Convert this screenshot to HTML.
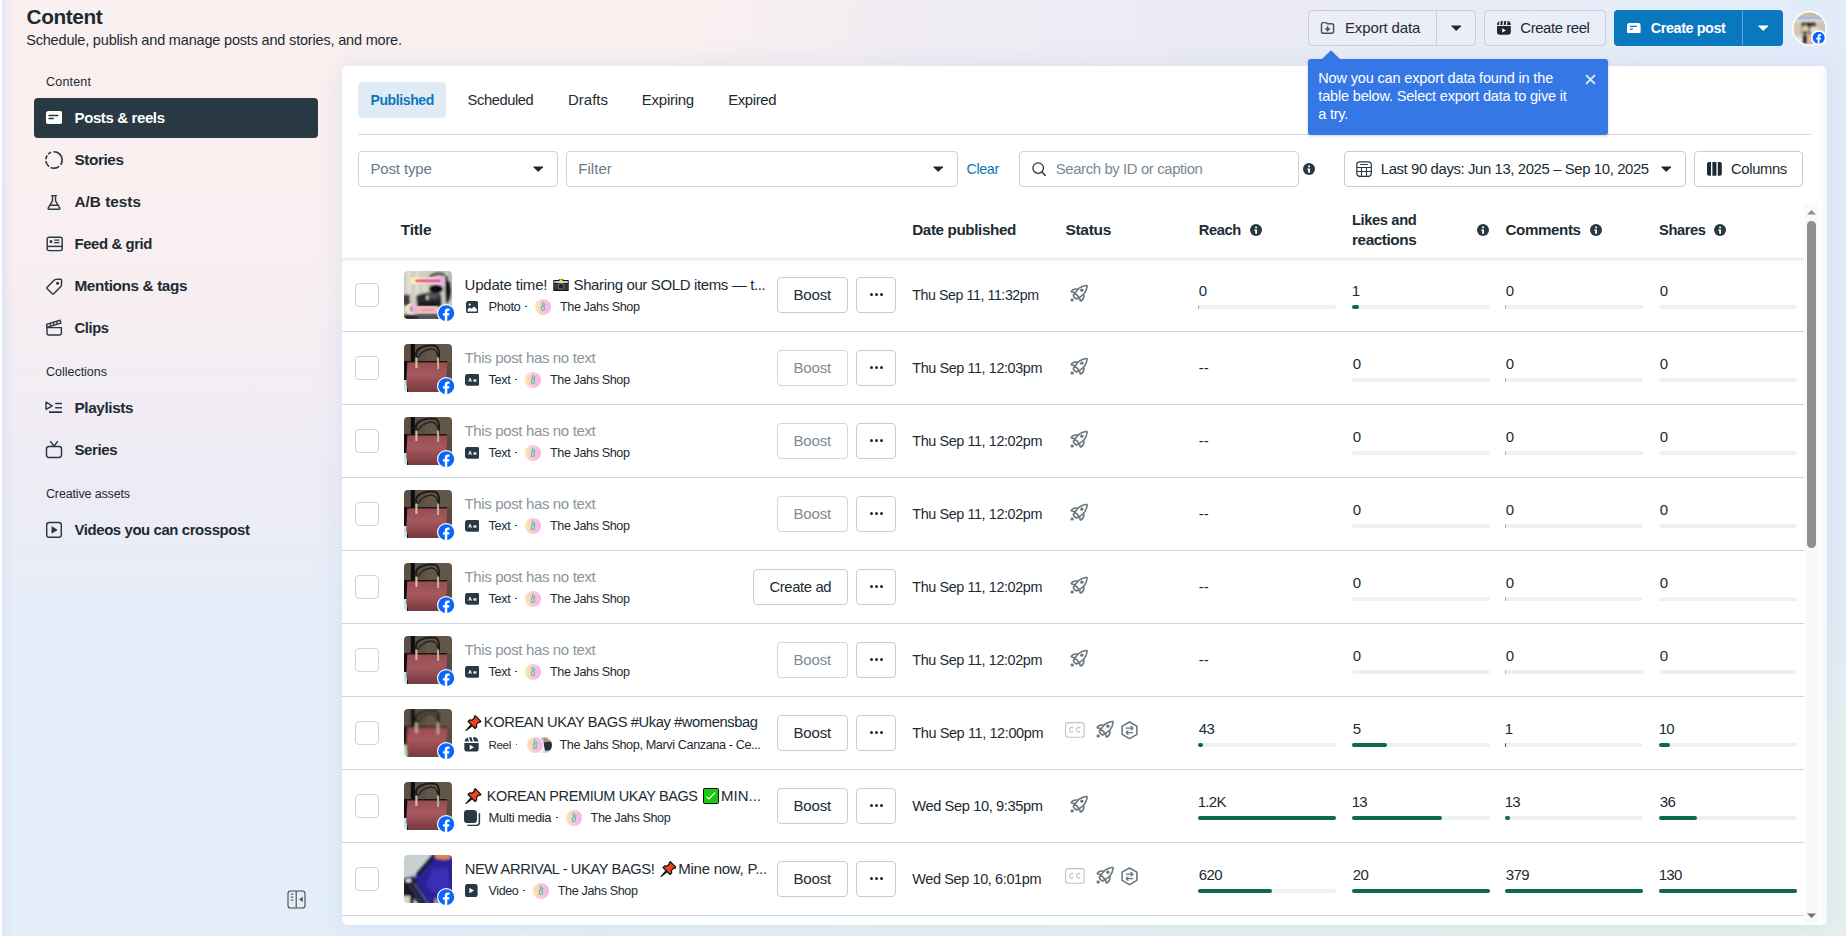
<!DOCTYPE html><html><head><meta charset="utf-8"><title>Content</title><style>
*{box-sizing:border-box;margin:0;padding:0}
html,body{width:1846px;height:936px;overflow:hidden}
body{position:relative;font-family:"Liberation Sans",sans-serif;color:#1c2b33;background:#e6ecf7;}
.abs,.t,svg.i{position:absolute}
.t{white-space:nowrap;line-height:20px;height:20px;display:block}
.bg{left:0;top:0;width:1846px;height:936px}
.panel{left:342px;top:66px;width:1485px;height:859px;background:#fff;border-radius:6px;box-shadow:0 0 24px rgba(175,195,232,.33)}
.btn{border:1px solid #c5ced6;border-radius:4px;background:#fff;height:36px}
.btn.dis{border-color:#d0d6dc}
.inp{border:1px solid #cbd3db;border-radius:4px;background:#fff;height:36px}
.cb{width:24px;height:24px;border:1px solid #ccd3da;border-radius:4px;background:#fff;left:355px}
.rowline{left:342px;width:1462px;height:1px;background:#cdd4dc}
.bar{height:4px;border-radius:2px;background:#eef1f4;width:138px}
.fill{height:4px;border-radius:2px;background:#0a6a50;left:0;top:0}
.thumb{left:404px;width:48px;height:48px;border-radius:5px;overflow:hidden}
.fb{width:18px;height:18px}
.av{width:16px;height:16px;border-radius:50%}
</style></head><body>
<div class="abs bg" style="background:linear-gradient(180deg,#faf0ef 0%,#f9eff0 26%,#f1ecf4 44%,#ebecf6 56%,#e4eef9 68%,#e3eef9 100%)"></div>
<div class="abs bg" style="background:linear-gradient(90deg,rgba(236,234,245,0) 36%,rgba(238,235,244,.9) 52%,#ebebf5 68%,#e7ecf7 84%,#e1ebf9 100%)"></div>
<div class="abs bg" style="background:radial-gradient(ellipse 1500px 400px at 100% 100%,rgba(228,241,238,1) 0,rgba(228,241,238,.95) 45%,rgba(228,241,238,0) 100%)"></div>
<div class="abs" style="left:2px;top:0;width:12px;height:936px;background:linear-gradient(90deg,rgba(222,226,246,.75),rgba(222,226,246,0))"></div>
<div class="abs" style="left:0;top:0;width:2px;height:936px;background:#fff"></div>
<span class="t" style="left:26.60px;top:7.49px;font-size:20.80px;font-weight:700;color:#1c2b33;letter-spacing:-0.410px;">Content</span>
<span class="t" style="left:26.20px;top:29.88px;font-size:14.50px;color:#1c2b33;letter-spacing:-0.184px;">Schedule, publish and manage posts and stories, and more.</span>
<span class="t" style="left:46.00px;top:71.67px;font-size:12.50px;color:#1c2b33;letter-spacing:0.203px;">Content</span>
<div class="abs" style="left:34px;top:98px;width:284px;height:40px;border-radius:4px;background:#283943"></div>
<span class="t" style="left:74.50px;top:108.10px;font-size:15.00px;font-weight:700;color:#fff;letter-spacing:-0.379px;">Posts &amp; reels</span>
<span class="t" style="left:74.50px;top:150.00px;font-size:15.30px;font-weight:700;color:#1c2b33;letter-spacing:-0.395px;">Stories</span>
<span class="t" style="left:74.50px;top:192.00px;font-size:15.30px;font-weight:700;color:#1c2b33;letter-spacing:0.023px;">A/B tests</span>
<span class="t" style="left:74.50px;top:234.14px;font-size:14.90px;font-weight:700;color:#1c2b33;letter-spacing:-0.396px;">Feed &amp; grid</span>
<span class="t" style="left:74.50px;top:276.00px;font-size:15.30px;font-weight:700;color:#1c2b33;letter-spacing:-0.368px;">Mentions &amp; tags</span>
<span class="t" style="left:74.50px;top:318.21px;font-size:14.70px;font-weight:700;color:#1c2b33;letter-spacing:-0.360px;">Clips</span>
<span class="t" style="left:74.50px;top:398.00px;font-size:15.30px;font-weight:700;color:#1c2b33;letter-spacing:-0.386px;">Playlists</span>
<span class="t" style="left:74.50px;top:440.10px;font-size:15.00px;font-weight:700;color:#1c2b33;letter-spacing:-0.407px;">Series</span>
<span class="t" style="left:74.50px;top:520.14px;font-size:14.90px;font-weight:700;color:#1c2b33;letter-spacing:-0.386px;">Videos you can crosspost</span>
<span class="t" style="left:46.00px;top:361.67px;font-size:12.50px;color:#1c2b33;letter-spacing:-0.014px;">Collections</span>
<span class="t" style="left:46.00px;top:483.67px;font-size:12.50px;color:#1c2b33;letter-spacing:-0.153px;">Creative assets</span>
<svg class="i" style="left:46.00px;top:111.40px;" width="16.4" height="13" viewBox="0 0 16.4 13"><rect x="0" y="0" width="16.4" height="13" rx="2.6" fill="#fff"/><path d="M3 4.6H11.8M3 7.6H7.3" stroke="#283943" stroke-width="1.5" stroke-linecap="round"/></svg>
<svg class="i" style="left:44.00px;top:150.00px;" width="20" height="20" viewBox="0 0 20 20"><circle cx="10" cy="10" r="8.2" fill="none" stroke="#283943" stroke-width="1.65" stroke-dasharray="18.4 2.1 9 1.8 6.5 1.8 4 1.5 3.5 2.9" transform="rotate(-93 10 10)"/></svg>
<svg class="i" style="left:46.00px;top:193.60px;" width="16" height="17" viewBox="0 0 16 17"><path d="M5.6 1.6H10.4 M6.5 1.8V6.8L2.3 13.8Q1.6 15.2 3.2 15.3H12.8Q14.4 15.2 13.7 13.8L9.5 6.8V1.8 M4.2 11.2H11.8" fill="none" stroke="#283943" stroke-width="1.45" stroke-linecap="round" stroke-linejoin="round"/></svg>
<svg class="i" style="left:45.50px;top:236.00px;" width="17.5" height="16" viewBox="0 0 17.5 16"><rect x="1.2" y="1.2" width="15" height="13.4" rx="1.8" fill="none" stroke="#283943" stroke-width="1.45"/><circle cx="5" cy="5.4" r="1.5" fill="#283943"/><path d="M8.2 4.2H13.4M8.2 6.6H13.4" stroke="#283943" stroke-width="1.2"/><path d="M1.2 10.4H16.2" stroke="#283943" stroke-width="1.45"/></svg>
<svg class="i" style="left:45.00px;top:277.00px;" width="19" height="19" viewBox="0 0 19 19"><path d="M2.2 10.3L9.3 3.1Q10 2.4 11 2.4L15.2 2.3Q16.6 2.3 16.6 3.7L16.5 7.9Q16.5 8.9 15.8 9.6L8.7 16.7Q8 17.4 7.3 16.7L2.2 11.7Q1.5 11 2.2 10.3Z" fill="none" stroke="#283943" stroke-width="1.45" stroke-linejoin="round"/><circle cx="12.6" cy="6.3" r="1.5" fill="#283943"/></svg>
<svg class="i" style="left:45.00px;top:318.00px;" width="19" height="19" viewBox="0 0 19 19"><path d="M2 9.6H16.4V15.3Q16.4 17 14.7 17H3.7Q2 17 2 15.3Z" fill="none" stroke="#283943" stroke-width="1.45" stroke-linejoin="round"/><path d="M2.1 9.3L1.5 6.4L15 2.2L15.9 5.1Z" fill="none" stroke="#283943" stroke-width="1.45" stroke-linejoin="round"/><path d="M5 5.3L6 8.1M8.2 4.3L9.2 7.1M11.4 3.3L12.4 6.1" stroke="#283943" stroke-width="1.3"/></svg>
<svg class="i" style="left:44.00px;top:399.00px;" width="20" height="16" viewBox="0 0 20 16"><path d="M2 3.2V10.4L8.2 6.8Z" fill="none" stroke="#283943" stroke-width="1.4" stroke-linejoin="round"/><path d="M11.2 4.5H18M11.2 8.8H18M5 13.1H18" stroke="#283943" stroke-width="1.6"/></svg>
<svg class="i" style="left:45.00px;top:440.00px;" width="18" height="19" viewBox="0 0 18 19"><rect x="1.5" y="6.4" width="15" height="11" rx="2.4" fill="none" stroke="#283943" stroke-width="1.45"/><path d="M5.6 1.6L9 6.2L12.4 1.6" fill="none" stroke="#283943" stroke-width="1.45" stroke-linecap="round" stroke-linejoin="round"/></svg>
<svg class="i" style="left:45.00px;top:521.00px;" width="18" height="18" viewBox="0 0 18 18"><rect x="1.7" y="1.5" width="14.6" height="14.8" rx="2.6" fill="none" stroke="#283943" stroke-width="1.45"/><path d="M6.9 5.6V12.2L12.2 8.9Z" fill="#283943" stroke="#283943" stroke-width=".6" stroke-linejoin="round"/></svg>
<svg class="i" style="left:286.50px;top:889.50px;" width="19" height="19" viewBox="0 0 19 19"><rect x="1" y="1" width="17" height="17" rx="2.6" fill="none" stroke="#45494e" stroke-width="1.1"/><path d="M9.2 1V18" stroke="#45494e" stroke-width="1.1"/><path d="M3.7 4.1H6.4M3.7 7.1H6.4M3.7 10.1H6.4" stroke="#45494e" stroke-width="1"/><path d="M12.2 9.4L15.6 6.8V12Z" fill="#45494e"/></svg>
<div class="abs panel"></div>
<div class="abs" style="left:358px;top:82px;width:88px;height:36px;border-radius:4px;background:#e1ebf5"></div>
<span class="t" style="left:370.50px;top:90.15px;font-size:14.00px;font-weight:700;color:#0a78be;letter-spacing:-0.393px;">Published</span>
<span class="t" style="left:467.60px;top:89.91px;font-size:14.70px;color:#1c2b33;letter-spacing:-0.409px;">Scheduled</span>
<span class="t" style="left:568.00px;top:89.80px;font-size:15.00px;color:#1c2b33;letter-spacing:-0.001px;">Drafts</span>
<span class="t" style="left:641.80px;top:89.80px;font-size:15.00px;color:#1c2b33;letter-spacing:-0.256px;">Expiring</span>
<span class="t" style="left:728.20px;top:89.84px;font-size:14.90px;color:#1c2b33;letter-spacing:-0.370px;">Expired</span>
<div class="abs" style="left:358px;top:134px;width:1453px;height:1px;background:#d7dce1"></div>
<div class="abs inp" style="left:358px;top:151px;width:200px"></div>
<span class="t" style="left:370.50px;top:158.80px;font-size:15.00px;color:#68798a;letter-spacing:-0.161px;">Post type</span>
<div class="abs inp" style="left:566px;top:151px;width:392px"></div>
<span class="t" style="left:578.25px;top:158.80px;font-size:15.00px;color:#68798a;letter-spacing:0.033px;">Filter</span>
<span class="t" style="left:966.50px;top:159.01px;font-size:14.40px;color:#0a78be;letter-spacing:-0.415px;">Clear</span>
<div class="abs inp" style="left:1019px;top:151px;width:280px"></div>
<span class="t" style="left:1055.75px;top:158.84px;font-size:14.90px;color:#7b8994;letter-spacing:-0.384px;">Search by ID or caption</span>
<div class="abs btn" style="left:1344px;top:151px;width:342px"></div>
<span class="t" style="left:1380.75px;top:158.84px;font-size:14.90px;color:#1c2b33;letter-spacing:-0.391px;">Last 90 days: Jun 13, 2025 – Sep 10, 2025</span>
<div class="abs btn" style="left:1694px;top:151px;width:109px"></div>
<span class="t" style="left:1731.00px;top:158.87px;font-size:14.80px;color:#1c2b33;letter-spacing:-0.358px;">Columns</span>
<svg class="i" style="left:532.75px;top:166.00px;" width="10.5" height="6" viewBox="0 0 10.5 6"><path d="M0.6 0.4H9.9 Q10.5 0.6 10 1.3L5.75 5.6 Q5.25 6 4.75 5.6L0.5 1.3Q0 0.6 0.6 0.4Z" fill="#1c2b33"/></svg>
<svg class="i" style="left:932.75px;top:166.00px;" width="10.5" height="6" viewBox="0 0 10.5 6"><path d="M0.6 0.4H9.9 Q10.5 0.6 10 1.3L5.75 5.6 Q5.25 6 4.75 5.6L0.5 1.3Q0 0.6 0.6 0.4Z" fill="#1c2b33"/></svg>
<svg class="i" style="left:1660.75px;top:166.00px;" width="10.5" height="6" viewBox="0 0 10.5 6"><path d="M0.6 0.4H9.9 Q10.5 0.6 10 1.3L5.75 5.6 Q5.25 6 4.75 5.6L0.5 1.3Q0 0.6 0.6 0.4Z" fill="#1c2b33"/></svg>
<svg class="i" style="left:1031.00px;top:161.00px;" width="16" height="16" viewBox="0 0 16 16"><circle cx="7.2" cy="7.1" r="5.3" fill="none" stroke="#283943" stroke-width="1.35"/><path d="M11.1 11.1L14.3 14.4" stroke="#283943" stroke-width="1.5" stroke-linecap="round"/></svg>
<svg class="i" style="left:1303.00px;top:163.00px;" width="12" height="12" viewBox="0 0 12 12"><circle cx="6" cy="6" r="6" fill="#283943"/><rect x="5.1" y="2.4" width="1.9" height="1.9" rx=".5" fill="#fff"/><path d="M4.4 5.5H7V9.8H5.2V6.9H4.4Z" fill="#fff"/></svg>
<svg class="i" style="left:1355.00px;top:160.00px;" width="18" height="18" viewBox="0 0 18 18"><rect x="1.8" y="1.8" width="14.5" height="14.5" rx="3" fill="none" stroke="#283943" stroke-width="1.2"/><path d="M5.6 4.5H12.5" stroke="#283943" stroke-width="1.2" stroke-linecap="round"/><path d="M1.8 7.5H16.3M1.8 11.5H16.3M6.5 7.5V16.3M11.5 7.5V16.3" stroke="#283943" stroke-width="1.1"/></svg>
<svg class="i" style="left:1706.70px;top:162.00px;" width="15" height="14" viewBox="0 0 15 14"><path d="M0 2Q0 0 2 0H4V13.8H2Q0 13.8 0 11.8Z M5.4 0H9.4V13.8H5.4Z M10.8 0H12.8Q14.8 0 14.8 2V11.8Q14.8 13.8 12.8 13.8H10.8Z" fill="#1c2b33"/></svg>
<div class="abs" style="left:342px;top:258px;width:1462px;height:6px;background:linear-gradient(180deg,rgba(0,0,0,.10) 0,rgba(0,0,0,.045) 30%,rgba(0,0,0,.012) 65%,rgba(0,0,0,0) 100%)"></div>
<span class="t" style="left:400.75px;top:219.83px;font-size:15.50px;font-weight:700;color:#1c2b33;letter-spacing:-0.208px;">Title</span>
<span class="t" style="left:912.25px;top:219.93px;font-size:15.20px;font-weight:700;color:#1c2b33;letter-spacing:-0.369px;">Date published</span>
<span class="t" style="left:1065.50px;top:219.83px;font-size:15.50px;font-weight:700;color:#1c2b33;letter-spacing:-0.324px;">Status</span>
<span class="t" style="left:1198.75px;top:220.11px;font-size:14.70px;font-weight:700;color:#1c2b33;letter-spacing:-0.405px;">Reach</span>
<span class="t" style="left:1352.00px;top:210.11px;font-size:14.70px;font-weight:700;color:#1c2b33;letter-spacing:-0.382px;">Likes and</span>
<span class="t" style="left:1352.00px;top:229.90px;font-size:15.30px;font-weight:700;color:#1c2b33;letter-spacing:-0.410px;">reactions</span>
<span class="t" style="left:1505.50px;top:219.97px;font-size:15.10px;font-weight:700;color:#1c2b33;letter-spacing:-0.361px;">Comments</span>
<span class="t" style="left:1659.00px;top:220.11px;font-size:14.70px;font-weight:700;color:#1c2b33;letter-spacing:-0.406px;">Shares</span>
<svg class="i" style="left:1250.00px;top:224.00px;" width="12" height="12" viewBox="0 0 12 12"><circle cx="6" cy="6" r="6" fill="#283943"/><rect x="5.1" y="2.4" width="1.9" height="1.9" rx=".5" fill="#fff"/><path d="M4.4 5.5H7V9.8H5.2V6.9H4.4Z" fill="#fff"/></svg>
<svg class="i" style="left:1477.00px;top:224.00px;" width="12" height="12" viewBox="0 0 12 12"><circle cx="6" cy="6" r="6" fill="#283943"/><rect x="5.1" y="2.4" width="1.9" height="1.9" rx=".5" fill="#fff"/><path d="M4.4 5.5H7V9.8H5.2V6.9H4.4Z" fill="#fff"/></svg>
<svg class="i" style="left:1590.00px;top:224.00px;" width="12" height="12" viewBox="0 0 12 12"><circle cx="6" cy="6" r="6" fill="#283943"/><rect x="5.1" y="2.4" width="1.9" height="1.9" rx=".5" fill="#fff"/><path d="M4.4 5.5H7V9.8H5.2V6.9H4.4Z" fill="#fff"/></svg>
<svg class="i" style="left:1714.00px;top:224.00px;" width="12" height="12" viewBox="0 0 12 12"><circle cx="6" cy="6" r="6" fill="#283943"/><rect x="5.1" y="2.4" width="1.9" height="1.9" rx=".5" fill="#fff"/><path d="M4.4 5.5H7V9.8H5.2V6.9H4.4Z" fill="#fff"/></svg>
<!--ROW0-->
<div class="abs rowline" style="top:331px"></div>
<div class="abs cb" style="top:283.0px"></div>
<svg class="i" style="left:404px;top:271.0px" width="48" height="48" viewBox="0 0 48 48"><defs><clipPath id="tc0"><rect width="48" height="48" rx="4"/></clipPath><linearGradient id="pl0" x1="0" x2="1" y1="0" y2="0"><stop offset="0" stop-color="#fbf3a6"/><stop offset=".45" stop-color="#f9c0c9"/><stop offset="1" stop-color="#f5a4ea"/></linearGradient><filter id="pf0" x="-10%" y="-10%" width="120%" height="120%"><feGaussianBlur stdDeviation="1"/></filter><filter id="pg0" x="-10%" y="-10%" width="120%" height="120%"><feGaussianBlur stdDeviation=".5"/></filter></defs><g clip-path="url(#tc0)"><g filter="url(#pf0)"><rect x="-4" y="-4" width="56" height="56" fill="#cfcdc0"/><rect x="3" y="-2" width="4" height="30" fill="#e2e0d6"/><rect x="11" y="-2" width="4" height="30" fill="#dedcd0"/><rect x="19" y="10" width="5" height="16" fill="#dcd8c6"/><path d="M25 5Q32 -1 41 2.6L40 5.2Q33 2.4 27 6.6Z" fill="#2a2a2c"/><path d="M41 4Q47 6 47.5 20Q47 32 42 33L41 20Z" fill="#19181b"/><rect x="44" y="-2" width="6" height="12" fill="#b9bcb8"/><ellipse cx="32" cy="18" rx="7.2" ry="4.6" fill="#0e0e10"/><path d="M12 25Q22 19 37 23L38 34L13 34Z" fill="#2c2c30"/><ellipse cx="29" cy="25" rx="6" ry="3" fill="#515158"/><ellipse cx="23.4" cy="26.6" rx="1.1" ry="2.4" fill="#e8e8ea"/><path d="M13 31H37V36H13Z" fill="#1a1a1d"/><rect x="-2" y="23.6" width="8" height="11" fill="#3c3c44"/><rect x="-2" y="43.4" width="52" height="6" fill="#26262a"/><rect x="14" y="42.4" width="20" height="7" fill="#55555a"/></g><g filter="url(#pg0)"><rect x="6.5" y="6" width="34" height="7.4" rx="3" fill="url(#pl0)"/><rect x="11.5" y="8.6" width="25" height="2.6" rx="1" fill="#cf5f8c" opacity=".8"/><rect x="9" y="35.2" width="25" height="7" rx="2" fill="#f4b7c3"/><rect x="16.5" y="37.8" width="14" height="2" rx="1" fill="#ee9a86" opacity=".85"/><circle cx="7.6" cy="37.8" r="5.9" fill="url(#pl0)"/><ellipse cx="7.6" cy="37.8" rx="1.5" ry="2.6" fill="#62c3c0"/></g></g></svg><svg class="i" style="left:436.80px;top:303.70px;" width="18.4" height="18.4" viewBox="0 0 18.4 18.4"><circle cx="9.2" cy="9.2" r="9.2" fill="#fff"/><circle cx="9.2" cy="9.2" r="8" fill="#0866ff"/><path transform="translate(9.2 9.2) scale(1)" d="M1.1 8V2.3H3L3.3 0H1.1V-1.4Q1.1 -2.5 2.3 -2.5H3.4V-4.6Q2.6 -4.8 1.6 -4.8Q-1.4 -4.8 -1.4 -1.7V0H-3.3V2.3H-1.4V8Z" fill="#fff"/></svg><svg class="i" style="left:465.70px;top:300.70px;" width="12.4" height="12.4" viewBox="0 0 12.4 12.4"><rect width="12.4" height="12.4" rx="2.6" fill="#283943"/><circle cx="3.7" cy="3.6" r="1.1" fill="#fff"/><path d="M1.6 10.6V8.2L3.8 6.4L5.6 7.8L8 5.6L10.8 8V10.6Z" fill="#fff"/></svg><svg class="i" style="left:535.00px;top:298.80px;" width="16" height="16" viewBox="0 0 16 16"><defs><linearGradient id="aga0" x1="0" x2="1" y1="0" y2="0"><stop offset="0" stop-color="#fde6a8"/><stop offset=".35" stop-color="#fbd3c8"/><stop offset="1" stop-color="#f9aef0"/></linearGradient></defs><circle cx="8" cy="8" r="8" fill="url(#aga0)"/><path d="M8 3.2Q6.6 4.6 7.6 6.4Q9.4 7.2 9.6 9.2Q9.4 11.4 7.6 11.6Q6.4 11.4 6.6 10.2M9.2 5Q10 5.2 9.8 6.2M6.6 7.6Q6 8.4 6.6 9" fill="none" stroke="#4bbdb9" stroke-width="1.35" stroke-linecap="round" opacity=".9"/><path d="M4.2 6.4L5.2 5.6M11.2 6.2L11.8 6.8M4.6 11.8H11" stroke="#b9a6a6" stroke-width=".5" opacity=".7"/></svg><svg class="i" style="left:552.80px;top:278.90px;" width="16" height="12.4" viewBox="0 0 16 12.4"><path d="M0.3 1.4Q0.3 0.9 0.8 0.9H5.4L6 0.2H10L10.6 0.9H15.2Q15.7 0.9 15.7 1.4V11.2Q15.7 12.2 14.7 12.2H1.3Q0.3 12.2 0.3 11.2Z" fill="#111"/><rect x="1.2" y="4.6" width="13.6" height="6.4" fill="#383838"/><rect x="1.2" y="2.2" width="13.6" height="1.6" fill="#fff"/><circle cx="2.6" cy="3" r=".7" fill="#f55"/><circle cx="8" cy="1.9" r="1.7" fill="#f2e30d"/><circle cx="8" cy="7.3" r="3" fill="#222" stroke="#999" stroke-width=".7"/></svg>
<span class="t" style="left:464.50px;top:275.00px;font-size:15.00px;color:#1c2b33;letter-spacing:-0.186px;">Update time!</span>
<span class="t" style="left:573.50px;top:275.00px;font-size:15.00px;color:#1c2b33;letter-spacing:-0.369px;">Sharing our SOLD items — t...</span>
<span class="t" style="left:488.50px;top:296.80px;font-size:13.00px;color:#1c2b33;letter-spacing:-0.418px;">Photo</span>
<div class="abs" style="left:525.10px;top:305.50px;width:1.8px;height:1.8px;border-radius:50%;background:#1c2b33"></div>
<span class="t" style="left:560.00px;top:296.93px;font-size:12.60px;color:#1c2b33;letter-spacing:-0.396px;">The Jahs Shop</span>
<div class="abs btn" style="left:777px;top:277.0px;width:71px"></div>
<span class="t" style="left:793.50px;top:284.80px;font-size:15.00px;color:#1c2b33;letter-spacing:-0.152px;">Boost</span>
<div class="abs btn" style="left:856px;top:277.0px;width:40px"></div>
<div class="abs" style="left:869.5px;top:293.0px;width:3px;height:3px;border-radius:50%;background:#1c2b33"></div>
<div class="abs" style="left:874.5px;top:293.0px;width:3px;height:3px;border-radius:50%;background:#1c2b33"></div>
<div class="abs" style="left:879.5px;top:293.0px;width:3px;height:3px;border-radius:50%;background:#1c2b33"></div>
<span class="t" style="left:912.25px;top:285.08px;font-size:14.20px;color:#1c2b33;letter-spacing:-0.415px;">Thu Sep 11, 11:32pm</span>
<svg class="i" style="left:1070.30px;top:283.60px;" width="18" height="18" viewBox="0 0 18 18"><g fill="none" stroke="#69747c" stroke-width="1.55" stroke-linecap="round" stroke-linejoin="round"><path d="M4.6 9.9Q8.2 2.6 15.9 1.4Q17.3 1.2 17.1 2.6Q15.9 10.3 8.6 13.9"/><ellipse cx="5.9" cy="12.4" rx="2.9" ry="1.75" transform="rotate(45 5.9 12.4)"/><path d="M7.2 5.1Q3.4 4.6 1.2 7.2Q1.1 7.8 1.8 7.9L4.4 8.6"/><path d="M13.9 11.2Q14.2 14.8 10.9 17Q10.2 17.2 10.1 16.4L9.6 13.8"/></g><circle cx="11.85" cy="6.2" r="1.65" fill="#69747c"/><rect x=".6" y="14.5" width="3.1" height="3.1" rx="1.3" fill="#69747c"/></svg>
<span class="t" style="left:1198.75px;top:280.80px;font-size:15.00px;color:#1c2b33;letter-spacing:-0.65px;">0</span>
<div class="abs bar" style="left:1198px;top:305.0px"><div class="abs fill" style="width:0.3px;opacity:.45"></div></div>
<span class="t" style="left:1351.65px;top:280.80px;font-size:15.00px;color:#1c2b33;letter-spacing:-0.65px;">1</span>
<div class="abs bar" style="left:1352px;top:305.0px"><div class="abs fill" style="width:6.5px"></div></div>
<span class="t" style="left:1505.75px;top:280.80px;font-size:15.00px;color:#1c2b33;letter-spacing:-0.65px;">0</span>
<div class="abs bar" style="left:1505px;top:305.0px"><div class="abs fill" style="width:0.3px;opacity:.45"></div></div>
<span class="t" style="left:1659.75px;top:280.80px;font-size:15.00px;color:#1c2b33;letter-spacing:-0.65px;">0</span>
<div class="abs bar" style="left:1659px;top:305.0px"></div>
<!--ROW1-->
<div class="abs rowline" style="top:404px"></div>
<div class="abs cb" style="top:356.0px"></div>
<svg class="i" style="left:404px;top:344.0px" width="48" height="48" viewBox="0 0 48 48"><defs><clipPath id="tc1"><rect width="48" height="48" rx="4"/></clipPath><linearGradient id="bg1" x1="0" y1="0" x2="0" y2="1"><stop offset="0" stop-color="#9a4a52"/><stop offset=".45" stop-color="#a5595e"/><stop offset="1" stop-color="#7a3940"/></linearGradient><filter id="bf1" x="-10%" y="-10%" width="120%" height="120%"><feGaussianBlur stdDeviation="0.35"/></filter></defs><g clip-path="url(#tc1)"><g filter="url(#bf1)"><rect x="-4" y="-4" width="56" height="56" fill="#5b5044"/><rect x="22" y="-2" width="30" height="22" fill="#62574a"/><rect x="6.8" y="-2" width="4" height="22" fill="#0c0b0a"/><rect x="-2" y="17" width="6" height="35" fill="#15110f"/><rect x="-2" y="36" width="5" height="16" fill="#bfe6ea"/><path d="M3.4 17.6H43.2L43.6 35L41 47.5H4.5L2.2 40Z" fill="url(#bg1)"/><path d="M3.4 17.8H43.2" stroke="#1d1614" stroke-width="1.5"/><path d="M12.3 19V12Q10.5 6 18 3.2Q24 0.5 31 1.8Q35.5 3 35 12V19" fill="none" stroke="#1c1b1b" stroke-width="2"/><path d="M14 14Q17 7 26 5Q33 4.5 33.6 12" fill="none" stroke="#252424" stroke-width="1.4"/><rect x="11.3" y="13.5" width="2.2" height="10.6" rx=".6" fill="#c9c193"/><rect x="33" y="13.5" width="2.2" height="11.6" rx=".6" fill="#b9b283"/><path d="M43.4 18L48 18V48H41Z" fill="#5a4c42"/></g></g></svg><svg class="i" style="left:436.80px;top:376.70px;" width="18.4" height="18.4" viewBox="0 0 18.4 18.4"><circle cx="9.2" cy="9.2" r="9.2" fill="#fff"/><circle cx="9.2" cy="9.2" r="8" fill="#0866ff"/><path transform="translate(9.2 9.2) scale(1)" d="M1.1 8V2.3H3L3.3 0H1.1V-1.4Q1.1 -2.5 2.3 -2.5H3.4V-4.6Q2.6 -4.8 1.6 -4.8Q-1.4 -4.8 -1.4 -1.7V0H-3.3V2.3H-1.4V8Z" fill="#fff"/></svg><svg class="i" style="left:464.50px;top:374.00px;" width="14.8" height="11.7" viewBox="0 0 14.8 11.7"><rect width="14.8" height="11.7" rx="2.4" fill="#283943"/><path d="M3.7 7.7L5.1 4.1L6.5 7.7M4.2 6.7H6" fill="none" stroke="#fff" stroke-width=".9"/><rect x="8.3" y="5.3" width="2.6" height="2.5" rx="1" fill="#e8ecef"/><path d="M11 5.1V7.8" stroke="#fff" stroke-width=".8"/></svg><svg class="i" style="left:525.00px;top:371.80px;" width="16" height="16" viewBox="0 0 16 16"><defs><linearGradient id="aga1" x1="0" x2="1" y1="0" y2="0"><stop offset="0" stop-color="#fde6a8"/><stop offset=".35" stop-color="#fbd3c8"/><stop offset="1" stop-color="#f9aef0"/></linearGradient></defs><circle cx="8" cy="8" r="8" fill="url(#aga1)"/><path d="M8 3.2Q6.6 4.6 7.6 6.4Q9.4 7.2 9.6 9.2Q9.4 11.4 7.6 11.6Q6.4 11.4 6.6 10.2M9.2 5Q10 5.2 9.8 6.2M6.6 7.6Q6 8.4 6.6 9" fill="none" stroke="#4bbdb9" stroke-width="1.35" stroke-linecap="round" opacity=".9"/><path d="M4.2 6.4L5.2 5.6M11.2 6.2L11.8 6.8M4.6 11.8H11" stroke="#b9a6a6" stroke-width=".5" opacity=".7"/></svg>
<span class="t" style="left:464.50px;top:348.00px;font-size:15.00px;color:#8c959d;letter-spacing:-0.358px;">This post has no text</span>
<span class="t" style="left:488.50px;top:369.86px;font-size:12.80px;color:#1c2b33;letter-spacing:-0.392px;">Text</span>
<div class="abs" style="left:515.10px;top:378.50px;width:1.8px;height:1.8px;border-radius:50%;background:#1c2b33"></div>
<span class="t" style="left:550.00px;top:369.93px;font-size:12.60px;color:#1c2b33;letter-spacing:-0.396px;">The Jahs Shop</span>
<div class="abs btn dis" style="left:777px;top:350.0px;width:71px"></div>
<span class="t" style="left:793.50px;top:357.80px;font-size:15.00px;color:#818b93;letter-spacing:-0.152px;">Boost</span>
<div class="abs btn" style="left:856px;top:350.0px;width:40px"></div>
<div class="abs" style="left:869.5px;top:366.0px;width:3px;height:3px;border-radius:50%;background:#1c2b33"></div>
<div class="abs" style="left:874.5px;top:366.0px;width:3px;height:3px;border-radius:50%;background:#1c2b33"></div>
<div class="abs" style="left:879.5px;top:366.0px;width:3px;height:3px;border-radius:50%;background:#1c2b33"></div>
<span class="t" style="left:912.25px;top:358.01px;font-size:14.40px;color:#1c2b33;letter-spacing:-0.399px;">Thu Sep 11, 12:03pm</span>
<svg class="i" style="left:1070.30px;top:356.60px;" width="18" height="18" viewBox="0 0 18 18"><g fill="none" stroke="#69747c" stroke-width="1.55" stroke-linecap="round" stroke-linejoin="round"><path d="M4.6 9.9Q8.2 2.6 15.9 1.4Q17.3 1.2 17.1 2.6Q15.9 10.3 8.6 13.9"/><ellipse cx="5.9" cy="12.4" rx="2.9" ry="1.75" transform="rotate(45 5.9 12.4)"/><path d="M7.2 5.1Q3.4 4.6 1.2 7.2Q1.1 7.8 1.8 7.9L4.4 8.6"/><path d="M13.9 11.2Q14.2 14.8 10.9 17Q10.2 17.2 10.1 16.4L9.6 13.8"/></g><circle cx="11.85" cy="6.2" r="1.65" fill="#69747c"/><rect x=".6" y="14.5" width="3.1" height="3.1" rx="1.3" fill="#69747c"/></svg>
<span class="t" style="left:1198.75px;top:357.80px;font-size:15.00px;color:#1c2b33;">--</span>
<span class="t" style="left:1352.75px;top:353.80px;font-size:15.00px;color:#1c2b33;letter-spacing:-0.65px;">0</span>
<div class="abs bar" style="left:1352px;top:378.0px"></div>
<span class="t" style="left:1505.75px;top:353.80px;font-size:15.00px;color:#1c2b33;letter-spacing:-0.65px;">0</span>
<div class="abs bar" style="left:1505px;top:378.0px"><div class="abs fill" style="width:0.3px;opacity:.45"></div></div>
<span class="t" style="left:1659.75px;top:353.80px;font-size:15.00px;color:#1c2b33;letter-spacing:-0.65px;">0</span>
<div class="abs bar" style="left:1659px;top:378.0px"></div>
<!--ROW2-->
<div class="abs rowline" style="top:477px"></div>
<div class="abs cb" style="top:429.0px"></div>
<svg class="i" style="left:404px;top:417.0px" width="48" height="48" viewBox="0 0 48 48"><defs><clipPath id="tc2"><rect width="48" height="48" rx="4"/></clipPath><linearGradient id="bg2" x1="0" y1="0" x2="0" y2="1"><stop offset="0" stop-color="#9a4a52"/><stop offset=".45" stop-color="#a5595e"/><stop offset="1" stop-color="#7a3940"/></linearGradient><filter id="bf2" x="-10%" y="-10%" width="120%" height="120%"><feGaussianBlur stdDeviation="0.35"/></filter></defs><g clip-path="url(#tc2)"><g filter="url(#bf2)"><rect x="-4" y="-4" width="56" height="56" fill="#5b5044"/><rect x="22" y="-2" width="30" height="22" fill="#62574a"/><rect x="6.8" y="-2" width="4" height="22" fill="#0c0b0a"/><rect x="-2" y="17" width="6" height="35" fill="#15110f"/><rect x="-2" y="36" width="5" height="16" fill="#bfe6ea"/><path d="M3.4 17.6H43.2L43.6 35L41 47.5H4.5L2.2 40Z" fill="url(#bg2)"/><path d="M3.4 17.8H43.2" stroke="#1d1614" stroke-width="1.5"/><path d="M12.3 19V12Q10.5 6 18 3.2Q24 0.5 31 1.8Q35.5 3 35 12V19" fill="none" stroke="#1c1b1b" stroke-width="2"/><path d="M14 14Q17 7 26 5Q33 4.5 33.6 12" fill="none" stroke="#252424" stroke-width="1.4"/><rect x="11.3" y="13.5" width="2.2" height="10.6" rx=".6" fill="#c9c193"/><rect x="33" y="13.5" width="2.2" height="11.6" rx=".6" fill="#b9b283"/><path d="M43.4 18L48 18V48H41Z" fill="#5a4c42"/></g></g></svg><svg class="i" style="left:436.80px;top:449.70px;" width="18.4" height="18.4" viewBox="0 0 18.4 18.4"><circle cx="9.2" cy="9.2" r="9.2" fill="#fff"/><circle cx="9.2" cy="9.2" r="8" fill="#0866ff"/><path transform="translate(9.2 9.2) scale(1)" d="M1.1 8V2.3H3L3.3 0H1.1V-1.4Q1.1 -2.5 2.3 -2.5H3.4V-4.6Q2.6 -4.8 1.6 -4.8Q-1.4 -4.8 -1.4 -1.7V0H-3.3V2.3H-1.4V8Z" fill="#fff"/></svg><svg class="i" style="left:464.50px;top:447.00px;" width="14.8" height="11.7" viewBox="0 0 14.8 11.7"><rect width="14.8" height="11.7" rx="2.4" fill="#283943"/><path d="M3.7 7.7L5.1 4.1L6.5 7.7M4.2 6.7H6" fill="none" stroke="#fff" stroke-width=".9"/><rect x="8.3" y="5.3" width="2.6" height="2.5" rx="1" fill="#e8ecef"/><path d="M11 5.1V7.8" stroke="#fff" stroke-width=".8"/></svg><svg class="i" style="left:525.00px;top:444.80px;" width="16" height="16" viewBox="0 0 16 16"><defs><linearGradient id="aga2" x1="0" x2="1" y1="0" y2="0"><stop offset="0" stop-color="#fde6a8"/><stop offset=".35" stop-color="#fbd3c8"/><stop offset="1" stop-color="#f9aef0"/></linearGradient></defs><circle cx="8" cy="8" r="8" fill="url(#aga2)"/><path d="M8 3.2Q6.6 4.6 7.6 6.4Q9.4 7.2 9.6 9.2Q9.4 11.4 7.6 11.6Q6.4 11.4 6.6 10.2M9.2 5Q10 5.2 9.8 6.2M6.6 7.6Q6 8.4 6.6 9" fill="none" stroke="#4bbdb9" stroke-width="1.35" stroke-linecap="round" opacity=".9"/><path d="M4.2 6.4L5.2 5.6M11.2 6.2L11.8 6.8M4.6 11.8H11" stroke="#b9a6a6" stroke-width=".5" opacity=".7"/></svg>
<span class="t" style="left:464.50px;top:421.00px;font-size:15.00px;color:#8c959d;letter-spacing:-0.358px;">This post has no text</span>
<span class="t" style="left:488.50px;top:442.86px;font-size:12.80px;color:#1c2b33;letter-spacing:-0.392px;">Text</span>
<div class="abs" style="left:515.10px;top:451.50px;width:1.8px;height:1.8px;border-radius:50%;background:#1c2b33"></div>
<span class="t" style="left:550.00px;top:442.93px;font-size:12.60px;color:#1c2b33;letter-spacing:-0.396px;">The Jahs Shop</span>
<div class="abs btn dis" style="left:777px;top:423.0px;width:71px"></div>
<span class="t" style="left:793.50px;top:430.80px;font-size:15.00px;color:#818b93;letter-spacing:-0.152px;">Boost</span>
<div class="abs btn" style="left:856px;top:423.0px;width:40px"></div>
<div class="abs" style="left:869.5px;top:439.0px;width:3px;height:3px;border-radius:50%;background:#1c2b33"></div>
<div class="abs" style="left:874.5px;top:439.0px;width:3px;height:3px;border-radius:50%;background:#1c2b33"></div>
<div class="abs" style="left:879.5px;top:439.0px;width:3px;height:3px;border-radius:50%;background:#1c2b33"></div>
<span class="t" style="left:912.25px;top:431.01px;font-size:14.40px;color:#1c2b33;letter-spacing:-0.399px;">Thu Sep 11, 12:02pm</span>
<svg class="i" style="left:1070.30px;top:429.60px;" width="18" height="18" viewBox="0 0 18 18"><g fill="none" stroke="#69747c" stroke-width="1.55" stroke-linecap="round" stroke-linejoin="round"><path d="M4.6 9.9Q8.2 2.6 15.9 1.4Q17.3 1.2 17.1 2.6Q15.9 10.3 8.6 13.9"/><ellipse cx="5.9" cy="12.4" rx="2.9" ry="1.75" transform="rotate(45 5.9 12.4)"/><path d="M7.2 5.1Q3.4 4.6 1.2 7.2Q1.1 7.8 1.8 7.9L4.4 8.6"/><path d="M13.9 11.2Q14.2 14.8 10.9 17Q10.2 17.2 10.1 16.4L9.6 13.8"/></g><circle cx="11.85" cy="6.2" r="1.65" fill="#69747c"/><rect x=".6" y="14.5" width="3.1" height="3.1" rx="1.3" fill="#69747c"/></svg>
<span class="t" style="left:1198.75px;top:430.80px;font-size:15.00px;color:#1c2b33;">--</span>
<span class="t" style="left:1352.75px;top:426.80px;font-size:15.00px;color:#1c2b33;letter-spacing:-0.65px;">0</span>
<div class="abs bar" style="left:1352px;top:451.0px"></div>
<span class="t" style="left:1505.75px;top:426.80px;font-size:15.00px;color:#1c2b33;letter-spacing:-0.65px;">0</span>
<div class="abs bar" style="left:1505px;top:451.0px"><div class="abs fill" style="width:0.3px;opacity:.45"></div></div>
<span class="t" style="left:1659.75px;top:426.80px;font-size:15.00px;color:#1c2b33;letter-spacing:-0.65px;">0</span>
<div class="abs bar" style="left:1659px;top:451.0px"></div>
<!--ROW3-->
<div class="abs rowline" style="top:550px"></div>
<div class="abs cb" style="top:502.0px"></div>
<svg class="i" style="left:404px;top:490.0px" width="48" height="48" viewBox="0 0 48 48"><defs><clipPath id="tc3"><rect width="48" height="48" rx="4"/></clipPath><linearGradient id="bg3" x1="0" y1="0" x2="0" y2="1"><stop offset="0" stop-color="#9a4a52"/><stop offset=".45" stop-color="#a5595e"/><stop offset="1" stop-color="#7a3940"/></linearGradient><filter id="bf3" x="-10%" y="-10%" width="120%" height="120%"><feGaussianBlur stdDeviation="0.35"/></filter></defs><g clip-path="url(#tc3)"><g filter="url(#bf3)"><rect x="-4" y="-4" width="56" height="56" fill="#5b5044"/><rect x="22" y="-2" width="30" height="22" fill="#62574a"/><rect x="6.8" y="-2" width="4" height="22" fill="#0c0b0a"/><rect x="-2" y="17" width="6" height="35" fill="#15110f"/><rect x="-2" y="36" width="5" height="16" fill="#bfe6ea"/><path d="M3.4 17.6H43.2L43.6 35L41 47.5H4.5L2.2 40Z" fill="url(#bg3)"/><path d="M3.4 17.8H43.2" stroke="#1d1614" stroke-width="1.5"/><path d="M12.3 19V12Q10.5 6 18 3.2Q24 0.5 31 1.8Q35.5 3 35 12V19" fill="none" stroke="#1c1b1b" stroke-width="2"/><path d="M14 14Q17 7 26 5Q33 4.5 33.6 12" fill="none" stroke="#252424" stroke-width="1.4"/><rect x="11.3" y="13.5" width="2.2" height="10.6" rx=".6" fill="#c9c193"/><rect x="33" y="13.5" width="2.2" height="11.6" rx=".6" fill="#b9b283"/><path d="M43.4 18L48 18V48H41Z" fill="#5a4c42"/></g></g></svg><svg class="i" style="left:436.80px;top:522.70px;" width="18.4" height="18.4" viewBox="0 0 18.4 18.4"><circle cx="9.2" cy="9.2" r="9.2" fill="#fff"/><circle cx="9.2" cy="9.2" r="8" fill="#0866ff"/><path transform="translate(9.2 9.2) scale(1)" d="M1.1 8V2.3H3L3.3 0H1.1V-1.4Q1.1 -2.5 2.3 -2.5H3.4V-4.6Q2.6 -4.8 1.6 -4.8Q-1.4 -4.8 -1.4 -1.7V0H-3.3V2.3H-1.4V8Z" fill="#fff"/></svg><svg class="i" style="left:464.50px;top:520.00px;" width="14.8" height="11.7" viewBox="0 0 14.8 11.7"><rect width="14.8" height="11.7" rx="2.4" fill="#283943"/><path d="M3.7 7.7L5.1 4.1L6.5 7.7M4.2 6.7H6" fill="none" stroke="#fff" stroke-width=".9"/><rect x="8.3" y="5.3" width="2.6" height="2.5" rx="1" fill="#e8ecef"/><path d="M11 5.1V7.8" stroke="#fff" stroke-width=".8"/></svg><svg class="i" style="left:525.00px;top:517.80px;" width="16" height="16" viewBox="0 0 16 16"><defs><linearGradient id="aga3" x1="0" x2="1" y1="0" y2="0"><stop offset="0" stop-color="#fde6a8"/><stop offset=".35" stop-color="#fbd3c8"/><stop offset="1" stop-color="#f9aef0"/></linearGradient></defs><circle cx="8" cy="8" r="8" fill="url(#aga3)"/><path d="M8 3.2Q6.6 4.6 7.6 6.4Q9.4 7.2 9.6 9.2Q9.4 11.4 7.6 11.6Q6.4 11.4 6.6 10.2M9.2 5Q10 5.2 9.8 6.2M6.6 7.6Q6 8.4 6.6 9" fill="none" stroke="#4bbdb9" stroke-width="1.35" stroke-linecap="round" opacity=".9"/><path d="M4.2 6.4L5.2 5.6M11.2 6.2L11.8 6.8M4.6 11.8H11" stroke="#b9a6a6" stroke-width=".5" opacity=".7"/></svg>
<span class="t" style="left:464.50px;top:494.00px;font-size:15.00px;color:#8c959d;letter-spacing:-0.358px;">This post has no text</span>
<span class="t" style="left:488.50px;top:515.86px;font-size:12.80px;color:#1c2b33;letter-spacing:-0.392px;">Text</span>
<div class="abs" style="left:515.10px;top:524.50px;width:1.8px;height:1.8px;border-radius:50%;background:#1c2b33"></div>
<span class="t" style="left:550.00px;top:515.93px;font-size:12.60px;color:#1c2b33;letter-spacing:-0.396px;">The Jahs Shop</span>
<div class="abs btn dis" style="left:777px;top:496.0px;width:71px"></div>
<span class="t" style="left:793.50px;top:503.80px;font-size:15.00px;color:#818b93;letter-spacing:-0.152px;">Boost</span>
<div class="abs btn" style="left:856px;top:496.0px;width:40px"></div>
<div class="abs" style="left:869.5px;top:512.0px;width:3px;height:3px;border-radius:50%;background:#1c2b33"></div>
<div class="abs" style="left:874.5px;top:512.0px;width:3px;height:3px;border-radius:50%;background:#1c2b33"></div>
<div class="abs" style="left:879.5px;top:512.0px;width:3px;height:3px;border-radius:50%;background:#1c2b33"></div>
<span class="t" style="left:912.25px;top:504.01px;font-size:14.40px;color:#1c2b33;letter-spacing:-0.399px;">Thu Sep 11, 12:02pm</span>
<svg class="i" style="left:1070.30px;top:502.60px;" width="18" height="18" viewBox="0 0 18 18"><g fill="none" stroke="#69747c" stroke-width="1.55" stroke-linecap="round" stroke-linejoin="round"><path d="M4.6 9.9Q8.2 2.6 15.9 1.4Q17.3 1.2 17.1 2.6Q15.9 10.3 8.6 13.9"/><ellipse cx="5.9" cy="12.4" rx="2.9" ry="1.75" transform="rotate(45 5.9 12.4)"/><path d="M7.2 5.1Q3.4 4.6 1.2 7.2Q1.1 7.8 1.8 7.9L4.4 8.6"/><path d="M13.9 11.2Q14.2 14.8 10.9 17Q10.2 17.2 10.1 16.4L9.6 13.8"/></g><circle cx="11.85" cy="6.2" r="1.65" fill="#69747c"/><rect x=".6" y="14.5" width="3.1" height="3.1" rx="1.3" fill="#69747c"/></svg>
<span class="t" style="left:1198.75px;top:503.80px;font-size:15.00px;color:#1c2b33;">--</span>
<span class="t" style="left:1352.75px;top:499.80px;font-size:15.00px;color:#1c2b33;letter-spacing:-0.65px;">0</span>
<div class="abs bar" style="left:1352px;top:524.0px"></div>
<span class="t" style="left:1505.75px;top:499.80px;font-size:15.00px;color:#1c2b33;letter-spacing:-0.65px;">0</span>
<div class="abs bar" style="left:1505px;top:524.0px"><div class="abs fill" style="width:0.3px;opacity:.45"></div></div>
<span class="t" style="left:1659.75px;top:499.80px;font-size:15.00px;color:#1c2b33;letter-spacing:-0.65px;">0</span>
<div class="abs bar" style="left:1659px;top:524.0px"></div>
<!--ROW4-->
<div class="abs rowline" style="top:623px"></div>
<div class="abs cb" style="top:575.0px"></div>
<svg class="i" style="left:404px;top:563.0px" width="48" height="48" viewBox="0 0 48 48"><defs><clipPath id="tc4"><rect width="48" height="48" rx="4"/></clipPath><linearGradient id="bg4" x1="0" y1="0" x2="0" y2="1"><stop offset="0" stop-color="#9a4a52"/><stop offset=".45" stop-color="#a5595e"/><stop offset="1" stop-color="#7a3940"/></linearGradient><filter id="bf4" x="-10%" y="-10%" width="120%" height="120%"><feGaussianBlur stdDeviation="0.35"/></filter></defs><g clip-path="url(#tc4)"><g filter="url(#bf4)"><rect x="-4" y="-4" width="56" height="56" fill="#5b5044"/><rect x="22" y="-2" width="30" height="22" fill="#62574a"/><rect x="6.8" y="-2" width="4" height="22" fill="#0c0b0a"/><rect x="-2" y="17" width="6" height="35" fill="#15110f"/><rect x="-2" y="36" width="5" height="16" fill="#bfe6ea"/><path d="M3.4 17.6H43.2L43.6 35L41 47.5H4.5L2.2 40Z" fill="url(#bg4)"/><path d="M3.4 17.8H43.2" stroke="#1d1614" stroke-width="1.5"/><path d="M12.3 19V12Q10.5 6 18 3.2Q24 0.5 31 1.8Q35.5 3 35 12V19" fill="none" stroke="#1c1b1b" stroke-width="2"/><path d="M14 14Q17 7 26 5Q33 4.5 33.6 12" fill="none" stroke="#252424" stroke-width="1.4"/><rect x="11.3" y="13.5" width="2.2" height="10.6" rx=".6" fill="#c9c193"/><rect x="33" y="13.5" width="2.2" height="11.6" rx=".6" fill="#b9b283"/><path d="M43.4 18L48 18V48H41Z" fill="#5a4c42"/></g></g></svg><svg class="i" style="left:436.80px;top:595.70px;" width="18.4" height="18.4" viewBox="0 0 18.4 18.4"><circle cx="9.2" cy="9.2" r="9.2" fill="#fff"/><circle cx="9.2" cy="9.2" r="8" fill="#0866ff"/><path transform="translate(9.2 9.2) scale(1)" d="M1.1 8V2.3H3L3.3 0H1.1V-1.4Q1.1 -2.5 2.3 -2.5H3.4V-4.6Q2.6 -4.8 1.6 -4.8Q-1.4 -4.8 -1.4 -1.7V0H-3.3V2.3H-1.4V8Z" fill="#fff"/></svg><svg class="i" style="left:464.50px;top:593.00px;" width="14.8" height="11.7" viewBox="0 0 14.8 11.7"><rect width="14.8" height="11.7" rx="2.4" fill="#283943"/><path d="M3.7 7.7L5.1 4.1L6.5 7.7M4.2 6.7H6" fill="none" stroke="#fff" stroke-width=".9"/><rect x="8.3" y="5.3" width="2.6" height="2.5" rx="1" fill="#e8ecef"/><path d="M11 5.1V7.8" stroke="#fff" stroke-width=".8"/></svg><svg class="i" style="left:525.00px;top:590.80px;" width="16" height="16" viewBox="0 0 16 16"><defs><linearGradient id="aga4" x1="0" x2="1" y1="0" y2="0"><stop offset="0" stop-color="#fde6a8"/><stop offset=".35" stop-color="#fbd3c8"/><stop offset="1" stop-color="#f9aef0"/></linearGradient></defs><circle cx="8" cy="8" r="8" fill="url(#aga4)"/><path d="M8 3.2Q6.6 4.6 7.6 6.4Q9.4 7.2 9.6 9.2Q9.4 11.4 7.6 11.6Q6.4 11.4 6.6 10.2M9.2 5Q10 5.2 9.8 6.2M6.6 7.6Q6 8.4 6.6 9" fill="none" stroke="#4bbdb9" stroke-width="1.35" stroke-linecap="round" opacity=".9"/><path d="M4.2 6.4L5.2 5.6M11.2 6.2L11.8 6.8M4.6 11.8H11" stroke="#b9a6a6" stroke-width=".5" opacity=".7"/></svg>
<span class="t" style="left:464.50px;top:567.00px;font-size:15.00px;color:#8c959d;letter-spacing:-0.358px;">This post has no text</span>
<span class="t" style="left:488.50px;top:588.86px;font-size:12.80px;color:#1c2b33;letter-spacing:-0.392px;">Text</span>
<div class="abs" style="left:515.10px;top:597.50px;width:1.8px;height:1.8px;border-radius:50%;background:#1c2b33"></div>
<span class="t" style="left:550.00px;top:588.93px;font-size:12.60px;color:#1c2b33;letter-spacing:-0.396px;">The Jahs Shop</span>
<div class="abs btn" style="left:753px;top:569.0px;width:95px"></div>
<span class="t" style="left:769.50px;top:576.87px;font-size:14.80px;color:#1c2b33;letter-spacing:-0.375px;">Create ad</span>
<div class="abs btn" style="left:856px;top:569.0px;width:40px"></div>
<div class="abs" style="left:869.5px;top:585.0px;width:3px;height:3px;border-radius:50%;background:#1c2b33"></div>
<div class="abs" style="left:874.5px;top:585.0px;width:3px;height:3px;border-radius:50%;background:#1c2b33"></div>
<div class="abs" style="left:879.5px;top:585.0px;width:3px;height:3px;border-radius:50%;background:#1c2b33"></div>
<span class="t" style="left:912.25px;top:577.01px;font-size:14.40px;color:#1c2b33;letter-spacing:-0.399px;">Thu Sep 11, 12:02pm</span>
<svg class="i" style="left:1070.30px;top:575.60px;" width="18" height="18" viewBox="0 0 18 18"><g fill="none" stroke="#69747c" stroke-width="1.55" stroke-linecap="round" stroke-linejoin="round"><path d="M4.6 9.9Q8.2 2.6 15.9 1.4Q17.3 1.2 17.1 2.6Q15.9 10.3 8.6 13.9"/><ellipse cx="5.9" cy="12.4" rx="2.9" ry="1.75" transform="rotate(45 5.9 12.4)"/><path d="M7.2 5.1Q3.4 4.6 1.2 7.2Q1.1 7.8 1.8 7.9L4.4 8.6"/><path d="M13.9 11.2Q14.2 14.8 10.9 17Q10.2 17.2 10.1 16.4L9.6 13.8"/></g><circle cx="11.85" cy="6.2" r="1.65" fill="#69747c"/><rect x=".6" y="14.5" width="3.1" height="3.1" rx="1.3" fill="#69747c"/></svg>
<span class="t" style="left:1198.75px;top:576.80px;font-size:15.00px;color:#1c2b33;">--</span>
<span class="t" style="left:1352.75px;top:572.80px;font-size:15.00px;color:#1c2b33;letter-spacing:-0.65px;">0</span>
<div class="abs bar" style="left:1352px;top:597.0px"></div>
<span class="t" style="left:1505.75px;top:572.80px;font-size:15.00px;color:#1c2b33;letter-spacing:-0.65px;">0</span>
<div class="abs bar" style="left:1505px;top:597.0px"><div class="abs fill" style="width:0.3px;opacity:.45"></div></div>
<span class="t" style="left:1659.75px;top:572.80px;font-size:15.00px;color:#1c2b33;letter-spacing:-0.65px;">0</span>
<div class="abs bar" style="left:1659px;top:597.0px"></div>
<!--ROW5-->
<div class="abs rowline" style="top:696px"></div>
<div class="abs cb" style="top:648.0px"></div>
<svg class="i" style="left:404px;top:636.0px" width="48" height="48" viewBox="0 0 48 48"><defs><clipPath id="tc5"><rect width="48" height="48" rx="4"/></clipPath><linearGradient id="bg5" x1="0" y1="0" x2="0" y2="1"><stop offset="0" stop-color="#9a4a52"/><stop offset=".45" stop-color="#a5595e"/><stop offset="1" stop-color="#7a3940"/></linearGradient><filter id="bf5" x="-10%" y="-10%" width="120%" height="120%"><feGaussianBlur stdDeviation="0.35"/></filter></defs><g clip-path="url(#tc5)"><g filter="url(#bf5)"><rect x="-4" y="-4" width="56" height="56" fill="#5b5044"/><rect x="22" y="-2" width="30" height="22" fill="#62574a"/><rect x="6.8" y="-2" width="4" height="22" fill="#0c0b0a"/><rect x="-2" y="17" width="6" height="35" fill="#15110f"/><rect x="-2" y="36" width="5" height="16" fill="#bfe6ea"/><path d="M3.4 17.6H43.2L43.6 35L41 47.5H4.5L2.2 40Z" fill="url(#bg5)"/><path d="M3.4 17.8H43.2" stroke="#1d1614" stroke-width="1.5"/><path d="M12.3 19V12Q10.5 6 18 3.2Q24 0.5 31 1.8Q35.5 3 35 12V19" fill="none" stroke="#1c1b1b" stroke-width="2"/><path d="M14 14Q17 7 26 5Q33 4.5 33.6 12" fill="none" stroke="#252424" stroke-width="1.4"/><rect x="11.3" y="13.5" width="2.2" height="10.6" rx=".6" fill="#c9c193"/><rect x="33" y="13.5" width="2.2" height="11.6" rx=".6" fill="#b9b283"/><path d="M43.4 18L48 18V48H41Z" fill="#5a4c42"/></g></g></svg><svg class="i" style="left:436.80px;top:668.70px;" width="18.4" height="18.4" viewBox="0 0 18.4 18.4"><circle cx="9.2" cy="9.2" r="9.2" fill="#fff"/><circle cx="9.2" cy="9.2" r="8" fill="#0866ff"/><path transform="translate(9.2 9.2) scale(1)" d="M1.1 8V2.3H3L3.3 0H1.1V-1.4Q1.1 -2.5 2.3 -2.5H3.4V-4.6Q2.6 -4.8 1.6 -4.8Q-1.4 -4.8 -1.4 -1.7V0H-3.3V2.3H-1.4V8Z" fill="#fff"/></svg><svg class="i" style="left:464.50px;top:666.00px;" width="14.8" height="11.7" viewBox="0 0 14.8 11.7"><rect width="14.8" height="11.7" rx="2.4" fill="#283943"/><path d="M3.7 7.7L5.1 4.1L6.5 7.7M4.2 6.7H6" fill="none" stroke="#fff" stroke-width=".9"/><rect x="8.3" y="5.3" width="2.6" height="2.5" rx="1" fill="#e8ecef"/><path d="M11 5.1V7.8" stroke="#fff" stroke-width=".8"/></svg><svg class="i" style="left:525.00px;top:663.80px;" width="16" height="16" viewBox="0 0 16 16"><defs><linearGradient id="aga5" x1="0" x2="1" y1="0" y2="0"><stop offset="0" stop-color="#fde6a8"/><stop offset=".35" stop-color="#fbd3c8"/><stop offset="1" stop-color="#f9aef0"/></linearGradient></defs><circle cx="8" cy="8" r="8" fill="url(#aga5)"/><path d="M8 3.2Q6.6 4.6 7.6 6.4Q9.4 7.2 9.6 9.2Q9.4 11.4 7.6 11.6Q6.4 11.4 6.6 10.2M9.2 5Q10 5.2 9.8 6.2M6.6 7.6Q6 8.4 6.6 9" fill="none" stroke="#4bbdb9" stroke-width="1.35" stroke-linecap="round" opacity=".9"/><path d="M4.2 6.4L5.2 5.6M11.2 6.2L11.8 6.8M4.6 11.8H11" stroke="#b9a6a6" stroke-width=".5" opacity=".7"/></svg>
<span class="t" style="left:464.50px;top:640.00px;font-size:15.00px;color:#8c959d;letter-spacing:-0.358px;">This post has no text</span>
<span class="t" style="left:488.50px;top:661.86px;font-size:12.80px;color:#1c2b33;letter-spacing:-0.392px;">Text</span>
<div class="abs" style="left:515.10px;top:670.50px;width:1.8px;height:1.8px;border-radius:50%;background:#1c2b33"></div>
<span class="t" style="left:550.00px;top:661.93px;font-size:12.60px;color:#1c2b33;letter-spacing:-0.396px;">The Jahs Shop</span>
<div class="abs btn dis" style="left:777px;top:642.0px;width:71px"></div>
<span class="t" style="left:793.50px;top:649.80px;font-size:15.00px;color:#818b93;letter-spacing:-0.152px;">Boost</span>
<div class="abs btn" style="left:856px;top:642.0px;width:40px"></div>
<div class="abs" style="left:869.5px;top:658.0px;width:3px;height:3px;border-radius:50%;background:#1c2b33"></div>
<div class="abs" style="left:874.5px;top:658.0px;width:3px;height:3px;border-radius:50%;background:#1c2b33"></div>
<div class="abs" style="left:879.5px;top:658.0px;width:3px;height:3px;border-radius:50%;background:#1c2b33"></div>
<span class="t" style="left:912.25px;top:650.01px;font-size:14.40px;color:#1c2b33;letter-spacing:-0.399px;">Thu Sep 11, 12:02pm</span>
<svg class="i" style="left:1070.30px;top:648.60px;" width="18" height="18" viewBox="0 0 18 18"><g fill="none" stroke="#69747c" stroke-width="1.55" stroke-linecap="round" stroke-linejoin="round"><path d="M4.6 9.9Q8.2 2.6 15.9 1.4Q17.3 1.2 17.1 2.6Q15.9 10.3 8.6 13.9"/><ellipse cx="5.9" cy="12.4" rx="2.9" ry="1.75" transform="rotate(45 5.9 12.4)"/><path d="M7.2 5.1Q3.4 4.6 1.2 7.2Q1.1 7.8 1.8 7.9L4.4 8.6"/><path d="M13.9 11.2Q14.2 14.8 10.9 17Q10.2 17.2 10.1 16.4L9.6 13.8"/></g><circle cx="11.85" cy="6.2" r="1.65" fill="#69747c"/><rect x=".6" y="14.5" width="3.1" height="3.1" rx="1.3" fill="#69747c"/></svg>
<span class="t" style="left:1198.75px;top:649.80px;font-size:15.00px;color:#1c2b33;">--</span>
<span class="t" style="left:1352.75px;top:645.80px;font-size:15.00px;color:#1c2b33;letter-spacing:-0.65px;">0</span>
<div class="abs bar" style="left:1352px;top:670.0px"></div>
<span class="t" style="left:1505.75px;top:645.80px;font-size:15.00px;color:#1c2b33;letter-spacing:-0.65px;">0</span>
<div class="abs bar" style="left:1505px;top:670.0px"><div class="abs fill" style="width:0.3px;opacity:.45"></div></div>
<span class="t" style="left:1659.75px;top:645.80px;font-size:15.00px;color:#1c2b33;letter-spacing:-0.65px;">0</span>
<div class="abs bar" style="left:1659px;top:670.0px"></div>
<!--ROW6-->
<div class="abs rowline" style="top:769px"></div>
<div class="abs cb" style="top:721.0px"></div>
<svg class="i" style="left:404px;top:709.0px" width="48" height="48" viewBox="0 0 48 48"><defs><clipPath id="tc6"><rect width="48" height="48" rx="4"/></clipPath><linearGradient id="bg6" x1="0" y1="0" x2="0" y2="1"><stop offset="0" stop-color="#9a4a52"/><stop offset=".45" stop-color="#a5595e"/><stop offset="1" stop-color="#7a3940"/></linearGradient><filter id="bf6" x="-10%" y="-10%" width="120%" height="120%"><feGaussianBlur stdDeviation="1.3"/></filter></defs><g clip-path="url(#tc6)"><g filter="url(#bf6)"><rect x="-4" y="-4" width="56" height="56" fill="#5b5044"/><rect x="22" y="-2" width="30" height="22" fill="#62574a"/><rect x="6.8" y="-2" width="4" height="22" fill="#0c0b0a"/><rect x="-2" y="17" width="6" height="35" fill="#15110f"/><rect x="-2" y="36" width="5" height="16" fill="#bfe8c4"/><path d="M3.4 17.6H43.2L43.6 35L41 47.5H4.5L2.2 40Z" fill="url(#bg6)"/><path d="M3.4 17.8H43.2" stroke="#1d1614" stroke-width="1.5"/><path d="M12.3 19V12Q10.5 6 18 3.2Q24 0.5 31 1.8Q35.5 3 35 12V19" fill="none" stroke="#1c1b1b" stroke-width="2"/><path d="M14 14Q17 7 26 5Q33 4.5 33.6 12" fill="none" stroke="#252424" stroke-width="1.4"/><rect x="11.3" y="13.5" width="2.2" height="10.6" rx=".6" fill="#c9c193"/><rect x="33" y="13.5" width="2.2" height="11.6" rx=".6" fill="#b9b283"/><path d="M43.4 18L48 18V48H41Z" fill="#5a4c42"/></g></g></svg><svg class="i" style="left:436.80px;top:741.70px;" width="18.4" height="18.4" viewBox="0 0 18.4 18.4"><circle cx="9.2" cy="9.2" r="9.2" fill="#fff"/><circle cx="9.2" cy="9.2" r="8" fill="#0866ff"/><path transform="translate(9.2 9.2) scale(1)" d="M1.1 8V2.3H3L3.3 0H1.1V-1.4Q1.1 -2.5 2.3 -2.5H3.4V-4.6Q2.6 -4.8 1.6 -4.8Q-1.4 -4.8 -1.4 -1.7V0H-3.3V2.3H-1.4V8Z" fill="#fff"/></svg><svg class="i" style="left:464.40px;top:736.70px;" width="15" height="15" viewBox="0 0 15 15"><path d="M0.3 6H14.7V11.4Q14.7 14.6 11.5 14.6H3.5Q0.3 14.6 0.3 11.4Z" fill="#283943"/><path d="M5.7 7.8V12.7L10 10.2Z" fill="#fff"/><path d="M0.5 4.6Q0.9 1.4 3.6 0.6L5 4.6Z M4.9 0.3H7.4L8.9 4.6H6.4Z M8.8 0.3H11.2Q13.9 0.9 14.5 4.6H10.3Z" fill="#283943"/></svg><svg class="i" style="left:536.00px;top:736.80px;" width="16" height="16" viewBox="0 0 16 16"><defs><clipPath id="a2c"><circle cx="8" cy="8" r="8"/></clipPath></defs><g clip-path="url(#a2c)"><rect width="16" height="16" fill="#b9bbc0"/><rect x="6" y="4.5" width="10" height="9" rx="2.5" fill="#2a2d36"/><circle cx="9.6" cy="3.2" r="2.2" fill="#b98a64"/><path d="M4 8Q7 7.5 8.5 10.5L9 16H2Z" fill="#f1ecec"/><circle cx="6.4" cy="7.6" r="1.7" fill="#4b3a34"/></g></svg><div class="abs" style="left:526px;top:735.8px;width:18px;height:18px;border-radius:50%;background:#fff"></div><svg class="i" style="left:527.00px;top:736.80px;" width="16" height="16" viewBox="0 0 16 16"><defs><linearGradient id="aga6" x1="0" x2="1" y1="0" y2="0"><stop offset="0" stop-color="#fde6a8"/><stop offset=".35" stop-color="#fbd3c8"/><stop offset="1" stop-color="#f9aef0"/></linearGradient></defs><circle cx="8" cy="8" r="8" fill="url(#aga6)"/><path d="M8 3.2Q6.6 4.6 7.6 6.4Q9.4 7.2 9.6 9.2Q9.4 11.4 7.6 11.6Q6.4 11.4 6.6 10.2M9.2 5Q10 5.2 9.8 6.2M6.6 7.6Q6 8.4 6.6 9" fill="none" stroke="#4bbdb9" stroke-width="1.35" stroke-linecap="round" opacity=".9"/><path d="M4.2 6.4L5.2 5.6M11.2 6.2L11.8 6.8M4.6 11.8H11" stroke="#b9a6a6" stroke-width=".5" opacity=".7"/></svg><svg class="i" style="left:465.10px;top:714.90px;" width="16.6" height="16.6" viewBox="0 0 16 16"><path d="M0.8 15.2L5.6 9.6L6.6 10.6Z" fill="#ddd" stroke="#111" stroke-width="1" stroke-linejoin="round"/><path d="M9.9 0.7L15.3 6.1L14.2 7.2L13.1 6.8L11 9.4L11.3 11.4L9.7 13L3 6.3L4.6 4.7L6.6 5L9.2 2.9L8.8 1.8Z" fill="#f0421c" stroke="#111" stroke-width="1.15" stroke-linejoin="round"/></svg>
<span class="t" style="left:483.80px;top:712.01px;font-size:14.70px;color:#1c2b33;letter-spacing:-0.398px;">KOREAN UKAY BAGS #Ukay #womensbag</span>
<span class="t" style="left:488.50px;top:735.28px;font-size:11.60px;color:#1c2b33;letter-spacing:-0.352px;">Reel</span>
<div class="abs" style="left:515.60px;top:743.50px;width:1.8px;height:1.8px;border-radius:50%;background:#1c2b33"></div>
<span class="t" style="left:559.40px;top:734.90px;font-size:12.70px;color:#1c2b33;letter-spacing:-0.409px;">The Jahs Shop, Marvi Canzana - Ce...</span>
<div class="abs btn" style="left:777px;top:715.0px;width:71px"></div>
<span class="t" style="left:793.50px;top:722.80px;font-size:15.00px;color:#1c2b33;letter-spacing:-0.152px;">Boost</span>
<div class="abs btn" style="left:856px;top:715.0px;width:40px"></div>
<div class="abs" style="left:869.5px;top:731.0px;width:3px;height:3px;border-radius:50%;background:#1c2b33"></div>
<div class="abs" style="left:874.5px;top:731.0px;width:3px;height:3px;border-radius:50%;background:#1c2b33"></div>
<div class="abs" style="left:879.5px;top:731.0px;width:3px;height:3px;border-radius:50%;background:#1c2b33"></div>
<span class="t" style="left:912.25px;top:722.98px;font-size:14.50px;color:#1c2b33;letter-spacing:-0.396px;">Thu Sep 11, 12:00pm</span>
<svg class="i" style="left:1065.00px;top:721.90px;" width="20" height="16" viewBox="0 0 20 16"><rect x=".6" y=".6" width="18.6" height="14.6" rx="2.2" fill="none" stroke="#bcc3ca" stroke-width="1.1"/><path d="M8.3 6.1Q7 4.9 5.5 5.8Q4.2 6.8 4.6 8.6Q5.2 10.3 6.9 10.1Q7.8 10 8.3 9.4 M15.3 6.1Q14 4.9 12.5 5.8Q11.2 6.8 11.6 8.6Q12.2 10.3 13.9 10.1Q14.8 10 15.3 9.4" fill="none" stroke="#bcc3ca" stroke-width="1.1"/></svg><svg class="i" style="left:1096.00px;top:720.30px;" width="18" height="18" viewBox="0 0 18 18"><g fill="none" stroke="#69747c" stroke-width="1.55" stroke-linecap="round" stroke-linejoin="round"><path d="M4.6 9.9Q8.2 2.6 15.9 1.4Q17.3 1.2 17.1 2.6Q15.9 10.3 8.6 13.9"/><ellipse cx="5.9" cy="12.4" rx="2.9" ry="1.75" transform="rotate(45 5.9 12.4)"/><path d="M7.2 5.1Q3.4 4.6 1.2 7.2Q1.1 7.8 1.8 7.9L4.4 8.6"/><path d="M13.9 11.2Q14.2 14.8 10.9 17Q10.2 17.2 10.1 16.4L9.6 13.8"/></g><circle cx="11.85" cy="6.2" r="1.65" fill="#69747c"/><rect x=".6" y="14.5" width="3.1" height="3.1" rx="1.3" fill="#69747c"/></svg><svg class="i" style="left:1120.50px;top:720.70px;" width="17" height="19" viewBox="0 0 17 19"><path d="M8.5 1L15.9 5.2V13.3L8.5 17.6L1.1 13.3V5.2Z" fill="none" stroke="#69747c" stroke-width="1.55" stroke-linejoin="round"/><path d="M4.8 7.2H11.6M9.6 5L11.9 7.2L9.6 9.4 M12.2 11.6H5.4M7.4 9.4L5.1 11.6L7.4 13.8" fill="none" stroke="#69747c" stroke-width="1.25" stroke-linejoin="round"/></svg>
<span class="t" style="left:1198.75px;top:718.80px;font-size:15.00px;color:#1c2b33;letter-spacing:-0.65px;">43</span>
<div class="abs bar" style="left:1198px;top:743.0px"><div class="abs fill" style="width:5.0px"></div></div>
<span class="t" style="left:1352.75px;top:718.80px;font-size:15.00px;color:#1c2b33;letter-spacing:-0.65px;">5</span>
<div class="abs bar" style="left:1352px;top:743.0px"><div class="abs fill" style="width:34.5px"></div></div>
<span class="t" style="left:1504.65px;top:718.80px;font-size:15.00px;color:#1c2b33;letter-spacing:-0.65px;">1</span>
<div class="abs bar" style="left:1505px;top:743.0px"><div class="abs fill" style="width:1.0px"></div></div>
<span class="t" style="left:1658.65px;top:718.80px;font-size:15.00px;color:#1c2b33;letter-spacing:-0.65px;">10</span>
<div class="abs bar" style="left:1659px;top:743.0px"><div class="abs fill" style="width:10.5px"></div></div>
<!--ROW7-->
<div class="abs rowline" style="top:842px"></div>
<div class="abs cb" style="top:794.0px"></div>
<svg class="i" style="left:404px;top:782.0px" width="48" height="48" viewBox="0 0 48 48"><defs><clipPath id="tc7"><rect width="48" height="48" rx="4"/></clipPath><linearGradient id="bg7" x1="0" y1="0" x2="0" y2="1"><stop offset="0" stop-color="#9a4a52"/><stop offset=".45" stop-color="#a5595e"/><stop offset="1" stop-color="#7a3940"/></linearGradient><filter id="bf7" x="-10%" y="-10%" width="120%" height="120%"><feGaussianBlur stdDeviation="0.35"/></filter></defs><g clip-path="url(#tc7)"><g filter="url(#bf7)"><rect x="-4" y="-4" width="56" height="56" fill="#5b5044"/><rect x="22" y="-2" width="30" height="22" fill="#62574a"/><rect x="6.8" y="-2" width="4" height="22" fill="#0c0b0a"/><rect x="-2" y="17" width="6" height="35" fill="#15110f"/><rect x="-2" y="36" width="5" height="16" fill="#bfe6ea"/><path d="M3.4 17.6H43.2L43.6 35L41 47.5H4.5L2.2 40Z" fill="url(#bg7)"/><path d="M3.4 17.8H43.2" stroke="#1d1614" stroke-width="1.5"/><path d="M12.3 19V12Q10.5 6 18 3.2Q24 0.5 31 1.8Q35.5 3 35 12V19" fill="none" stroke="#1c1b1b" stroke-width="2"/><path d="M14 14Q17 7 26 5Q33 4.5 33.6 12" fill="none" stroke="#252424" stroke-width="1.4"/><rect x="11.3" y="13.5" width="2.2" height="10.6" rx=".6" fill="#c9c193"/><rect x="33" y="13.5" width="2.2" height="11.6" rx=".6" fill="#b9b283"/><path d="M43.4 18L48 18V48H41Z" fill="#5a4c42"/></g></g></svg><svg class="i" style="left:436.80px;top:814.70px;" width="18.4" height="18.4" viewBox="0 0 18.4 18.4"><circle cx="9.2" cy="9.2" r="9.2" fill="#fff"/><circle cx="9.2" cy="9.2" r="8" fill="#0866ff"/><path transform="translate(9.2 9.2) scale(1)" d="M1.1 8V2.3H3L3.3 0H1.1V-1.4Q1.1 -2.5 2.3 -2.5H3.4V-4.6Q2.6 -4.8 1.6 -4.8Q-1.4 -4.8 -1.4 -1.7V0H-3.3V2.3H-1.4V8Z" fill="#fff"/></svg><svg class="i" style="left:464.20px;top:809.50px;" width="16.5" height="16.5" viewBox="0 0 16.5 16.5"><rect x="0" y="0" width="13" height="13" rx="3.2" fill="#283943"/><path d="M15.4 3.8V12Q15.4 15.4 12 15.4H4" fill="none" stroke="#283943" stroke-width="1.5" stroke-linecap="round"/></svg><svg class="i" style="left:566.00px;top:809.80px;" width="16" height="16" viewBox="0 0 16 16"><defs><linearGradient id="aga7" x1="0" x2="1" y1="0" y2="0"><stop offset="0" stop-color="#fde6a8"/><stop offset=".35" stop-color="#fbd3c8"/><stop offset="1" stop-color="#f9aef0"/></linearGradient></defs><circle cx="8" cy="8" r="8" fill="url(#aga7)"/><path d="M8 3.2Q6.6 4.6 7.6 6.4Q9.4 7.2 9.6 9.2Q9.4 11.4 7.6 11.6Q6.4 11.4 6.6 10.2M9.2 5Q10 5.2 9.8 6.2M6.6 7.6Q6 8.4 6.6 9" fill="none" stroke="#4bbdb9" stroke-width="1.35" stroke-linecap="round" opacity=".9"/><path d="M4.2 6.4L5.2 5.6M11.2 6.2L11.8 6.8M4.6 11.8H11" stroke="#b9a6a6" stroke-width=".5" opacity=".7"/></svg><svg class="i" style="left:465.10px;top:787.90px;" width="16.6" height="16.6" viewBox="0 0 16 16"><path d="M0.8 15.2L5.6 9.6L6.6 10.6Z" fill="#ddd" stroke="#111" stroke-width="1" stroke-linejoin="round"/><path d="M9.9 0.7L15.3 6.1L14.2 7.2L13.1 6.8L11 9.4L11.3 11.4L9.7 13L3 6.3L4.6 4.7L6.6 5L9.2 2.9L8.8 1.8Z" fill="#f0421c" stroke="#111" stroke-width="1.15" stroke-linejoin="round"/></svg><svg class="i" style="left:703.00px;top:788.00px;" width="16" height="16" viewBox="0 0 16 16"><rect x=".5" y=".5" width="15" height="15" rx=".8" fill="#18c80e" stroke="#111" stroke-width="1"/><path d="M3.4 8.6L5.8 10.9L12.2 4.6" fill="none" stroke="#fff" stroke-width="1.3"/></svg>
<span class="t" style="left:486.80px;top:786.18px;font-size:14.50px;color:#1c2b33;letter-spacing:-0.393px;">KOREAN PREMIUM UKAY BAGS</span>
<span class="t" style="left:721.00px;top:786.00px;font-size:15.00px;color:#1c2b33;letter-spacing:0.000px;">MIN...</span>
<span class="t" style="left:488.50px;top:807.80px;font-size:13.00px;color:#1c2b33;letter-spacing:-0.337px;">Multi media</span>
<div class="abs" style="left:555.90px;top:816.50px;width:1.8px;height:1.8px;border-radius:50%;background:#1c2b33"></div>
<span class="t" style="left:590.60px;top:807.93px;font-size:12.60px;color:#1c2b33;letter-spacing:-0.388px;">The Jahs Shop</span>
<div class="abs btn" style="left:777px;top:788.0px;width:71px"></div>
<span class="t" style="left:793.50px;top:795.80px;font-size:15.00px;color:#1c2b33;letter-spacing:-0.152px;">Boost</span>
<div class="abs btn" style="left:856px;top:788.0px;width:40px"></div>
<div class="abs" style="left:869.5px;top:804.0px;width:3px;height:3px;border-radius:50%;background:#1c2b33"></div>
<div class="abs" style="left:874.5px;top:804.0px;width:3px;height:3px;border-radius:50%;background:#1c2b33"></div>
<div class="abs" style="left:879.5px;top:804.0px;width:3px;height:3px;border-radius:50%;background:#1c2b33"></div>
<span class="t" style="left:912.25px;top:795.91px;font-size:14.70px;color:#1c2b33;letter-spacing:-0.417px;">Wed Sep 10, 9:35pm</span>
<svg class="i" style="left:1070.30px;top:794.60px;" width="18" height="18" viewBox="0 0 18 18"><g fill="none" stroke="#69747c" stroke-width="1.55" stroke-linecap="round" stroke-linejoin="round"><path d="M4.6 9.9Q8.2 2.6 15.9 1.4Q17.3 1.2 17.1 2.6Q15.9 10.3 8.6 13.9"/><ellipse cx="5.9" cy="12.4" rx="2.9" ry="1.75" transform="rotate(45 5.9 12.4)"/><path d="M7.2 5.1Q3.4 4.6 1.2 7.2Q1.1 7.8 1.8 7.9L4.4 8.6"/><path d="M13.9 11.2Q14.2 14.8 10.9 17Q10.2 17.2 10.1 16.4L9.6 13.8"/></g><circle cx="11.85" cy="6.2" r="1.65" fill="#69747c"/><rect x=".6" y="14.5" width="3.1" height="3.1" rx="1.3" fill="#69747c"/></svg>
<span class="t" style="left:1197.65px;top:791.80px;font-size:15.00px;color:#1c2b33;letter-spacing:-0.65px;">1.2K</span>
<div class="abs bar" style="left:1198px;top:816.0px"><div class="abs fill" style="width:138.0px"></div></div>
<span class="t" style="left:1351.65px;top:791.80px;font-size:15.00px;color:#1c2b33;letter-spacing:-0.65px;">13</span>
<div class="abs bar" style="left:1352px;top:816.0px"><div class="abs fill" style="width:89.5px"></div></div>
<span class="t" style="left:1504.65px;top:791.80px;font-size:15.00px;color:#1c2b33;letter-spacing:-0.65px;">13</span>
<div class="abs bar" style="left:1505px;top:816.0px"><div class="abs fill" style="width:5.0px"></div></div>
<span class="t" style="left:1659.75px;top:791.80px;font-size:15.00px;color:#1c2b33;letter-spacing:-0.65px;">36</span>
<div class="abs bar" style="left:1659px;top:816.0px"><div class="abs fill" style="width:38.0px"></div></div>
<!--ROW8-->
<div class="abs rowline" style="top:915px"></div>
<div class="abs cb" style="top:867.0px"></div>
<svg class="i" style="left:404px;top:855.0px" width="48" height="48" viewBox="0 0 48 48"><defs><clipPath id="tc8"><rect width="48" height="48" rx="4"/></clipPath><filter id="vf8" x="-10%" y="-10%" width="120%" height="120%"><feGaussianBlur stdDeviation="1.1"/></filter></defs><g clip-path="url(#tc8)"><g filter="url(#vf8)"><rect x="-4" y="-4" width="56" height="56" fill="#c3caca"/><path d="M-4 -4H30L10 20L-4 24Z" fill="#c9d0d0"/><path d="M30 -3L52 -3V52H20L10 30L12 18Z" fill="#2b2094"/><path d="M28 14L44 12L46 34L32 40L22 30Z" fill="#3a2fb4"/><path d="M12 18L30 -2L33 1L14 22Z" fill="#1c1a44"/><path d="M31 -4H46V4Q38 6 31 3Z" fill="#d8894c"/><path d="M-4 24L10 21L22 46L18 52H-4Z" fill="#1c1b27"/><path d="M10 28L26 52" stroke="#5a57a0" stroke-width="1.6"/><path d="M6 30L20 52" stroke="#46447a" stroke-width="1.2"/><ellipse cx="4.5" cy="25.5" rx="3" ry="1.8" fill="#e6e8ee"/><path d="M-4 41H6V52H-4Z" fill="#d9d3c3"/><path d="M10 44L16 52H10Z" fill="#e4e0ee"/><path d="M31 42L36 52H30Z" fill="#c8a69a"/></g></g></svg><svg class="i" style="left:436.80px;top:887.70px;" width="18.4" height="18.4" viewBox="0 0 18.4 18.4"><circle cx="9.2" cy="9.2" r="9.2" fill="#fff"/><circle cx="9.2" cy="9.2" r="8" fill="#0866ff"/><path transform="translate(9.2 9.2) scale(1)" d="M1.1 8V2.3H3L3.3 0H1.1V-1.4Q1.1 -2.5 2.3 -2.5H3.4V-4.6Q2.6 -4.8 1.6 -4.8Q-1.4 -4.8 -1.4 -1.7V0H-3.3V2.3H-1.4V8Z" fill="#fff"/></svg><svg class="i" style="left:465.20px;top:883.90px;" width="12.6" height="13.2" viewBox="0 0 12.6 13.2"><rect width="12.6" height="13.2" rx="2.4" fill="#283943"/><path d="M4.4 3.9V9.3L9 6.6Z" fill="#fff"/></svg><svg class="i" style="left:533.00px;top:882.80px;" width="16" height="16" viewBox="0 0 16 16"><defs><linearGradient id="aga8" x1="0" x2="1" y1="0" y2="0"><stop offset="0" stop-color="#fde6a8"/><stop offset=".35" stop-color="#fbd3c8"/><stop offset="1" stop-color="#f9aef0"/></linearGradient></defs><circle cx="8" cy="8" r="8" fill="url(#aga8)"/><path d="M8 3.2Q6.6 4.6 7.6 6.4Q9.4 7.2 9.6 9.2Q9.4 11.4 7.6 11.6Q6.4 11.4 6.6 10.2M9.2 5Q10 5.2 9.8 6.2M6.6 7.6Q6 8.4 6.6 9" fill="none" stroke="#4bbdb9" stroke-width="1.35" stroke-linecap="round" opacity=".9"/><path d="M4.2 6.4L5.2 5.6M11.2 6.2L11.8 6.8M4.6 11.8H11" stroke="#b9a6a6" stroke-width=".5" opacity=".7"/></svg><svg class="i" style="left:659.70px;top:860.90px;" width="16.6" height="16.6" viewBox="0 0 16 16"><path d="M0.8 15.2L5.6 9.6L6.6 10.6Z" fill="#ddd" stroke="#111" stroke-width="1" stroke-linejoin="round"/><path d="M9.9 0.7L15.3 6.1L14.2 7.2L13.1 6.8L11 9.4L11.3 11.4L9.7 13L3 6.3L4.6 4.7L6.6 5L9.2 2.9L8.8 1.8Z" fill="#f0421c" stroke="#111" stroke-width="1.15" stroke-linejoin="round"/></svg>
<span class="t" style="left:464.70px;top:859.11px;font-size:14.70px;color:#1c2b33;letter-spacing:-0.404px;">NEW ARRIVAL - UKAY BAGS!</span>
<span class="t" style="left:678.30px;top:859.00px;font-size:15.00px;color:#1c2b33;letter-spacing:-0.260px;">Mine now, P...</span>
<span class="t" style="left:488.50px;top:880.97px;font-size:12.50px;color:#1c2b33;letter-spacing:-0.361px;">Video</span>
<div class="abs" style="left:523.10px;top:889.50px;width:1.8px;height:1.8px;border-radius:50%;background:#1c2b33"></div>
<span class="t" style="left:557.80px;top:880.93px;font-size:12.60px;color:#1c2b33;letter-spacing:-0.380px;">The Jahs Shop</span>
<div class="abs btn" style="left:777px;top:861.0px;width:71px"></div>
<span class="t" style="left:793.50px;top:868.80px;font-size:15.00px;color:#1c2b33;letter-spacing:-0.152px;">Boost</span>
<div class="abs btn" style="left:856px;top:861.0px;width:40px"></div>
<div class="abs" style="left:869.5px;top:877.0px;width:3px;height:3px;border-radius:50%;background:#1c2b33"></div>
<div class="abs" style="left:874.5px;top:877.0px;width:3px;height:3px;border-radius:50%;background:#1c2b33"></div>
<div class="abs" style="left:879.5px;top:877.0px;width:3px;height:3px;border-radius:50%;background:#1c2b33"></div>
<span class="t" style="left:912.25px;top:868.98px;font-size:14.50px;color:#1c2b33;letter-spacing:-0.395px;">Wed Sep 10, 6:01pm</span>
<svg class="i" style="left:1065.00px;top:867.90px;" width="20" height="16" viewBox="0 0 20 16"><rect x=".6" y=".6" width="18.6" height="14.6" rx="2.2" fill="none" stroke="#bcc3ca" stroke-width="1.1"/><path d="M8.3 6.1Q7 4.9 5.5 5.8Q4.2 6.8 4.6 8.6Q5.2 10.3 6.9 10.1Q7.8 10 8.3 9.4 M15.3 6.1Q14 4.9 12.5 5.8Q11.2 6.8 11.6 8.6Q12.2 10.3 13.9 10.1Q14.8 10 15.3 9.4" fill="none" stroke="#bcc3ca" stroke-width="1.1"/></svg><svg class="i" style="left:1096.00px;top:866.30px;" width="18" height="18" viewBox="0 0 18 18"><g fill="none" stroke="#69747c" stroke-width="1.55" stroke-linecap="round" stroke-linejoin="round"><path d="M4.6 9.9Q8.2 2.6 15.9 1.4Q17.3 1.2 17.1 2.6Q15.9 10.3 8.6 13.9"/><ellipse cx="5.9" cy="12.4" rx="2.9" ry="1.75" transform="rotate(45 5.9 12.4)"/><path d="M7.2 5.1Q3.4 4.6 1.2 7.2Q1.1 7.8 1.8 7.9L4.4 8.6"/><path d="M13.9 11.2Q14.2 14.8 10.9 17Q10.2 17.2 10.1 16.4L9.6 13.8"/></g><circle cx="11.85" cy="6.2" r="1.65" fill="#69747c"/><rect x=".6" y="14.5" width="3.1" height="3.1" rx="1.3" fill="#69747c"/></svg><svg class="i" style="left:1120.50px;top:866.70px;" width="17" height="19" viewBox="0 0 17 19"><path d="M8.5 1L15.9 5.2V13.3L8.5 17.6L1.1 13.3V5.2Z" fill="none" stroke="#69747c" stroke-width="1.55" stroke-linejoin="round"/><path d="M4.8 7.2H11.6M9.6 5L11.9 7.2L9.6 9.4 M12.2 11.6H5.4M7.4 9.4L5.1 11.6L7.4 13.8" fill="none" stroke="#69747c" stroke-width="1.25" stroke-linejoin="round"/></svg>
<span class="t" style="left:1198.75px;top:864.80px;font-size:15.00px;color:#1c2b33;letter-spacing:-0.65px;">620</span>
<div class="abs bar" style="left:1198px;top:889.0px"><div class="abs fill" style="width:73.5px"></div></div>
<span class="t" style="left:1352.75px;top:864.80px;font-size:15.00px;color:#1c2b33;letter-spacing:-0.65px;">20</span>
<div class="abs bar" style="left:1352px;top:889.0px"><div class="abs fill" style="width:138.0px"></div></div>
<span class="t" style="left:1505.75px;top:864.80px;font-size:15.00px;color:#1c2b33;letter-spacing:-0.65px;">379</span>
<div class="abs bar" style="left:1505px;top:889.0px"><div class="abs fill" style="width:138.0px"></div></div>
<span class="t" style="left:1658.65px;top:864.80px;font-size:15.00px;color:#1c2b33;letter-spacing:-0.65px;">130</span>
<div class="abs bar" style="left:1659px;top:889.0px"><div class="abs fill" style="width:138.0px"></div></div>
<div class="abs rowline" style="top:915px;display:none"></div>
<div class="abs" style="left:1805px;top:204px;width:13px;height:719px;background:#f8f9fb"></div>
<div class="abs" style="left:1818px;top:70px;width:9px;height:850px;background:linear-gradient(90deg,#fff,#f3f7fd)"></div>
<div class="abs" style="left:1807px;top:221px;width:9px;height:327px;border-radius:4.5px;background:#8e8e8e"></div>
<svg class="i" style="left:1806px;top:208px" width="11" height="8" viewBox="0 0 11 8"><path d="M1 6.5 L5.5 2 L10 6.5Z" fill="#8e8e8e"/></svg>
<svg class="i" style="left:1806px;top:912px" width="11" height="8" viewBox="0 0 11 8"><path d="M1 1.5 L5.5 6 L10 1.5Z" fill="#6e6e6e"/></svg>
<div class="abs btn" style="left:1308px;top:10px;width:168px;background:rgba(255,255,255,.14)"></div>
<div class="abs" style="left:1436px;top:10px;width:1px;height:36px;background:#c5ced6"></div>
<span class="t" style="left:1345.00px;top:18.00px;font-size:15.00px;color:#1c2b33;letter-spacing:-0.131px;">Export data</span>
<div class="abs btn" style="left:1484px;top:10px;width:122px;background:rgba(255,255,255,.14)"></div>
<span class="t" style="left:1520.30px;top:18.04px;font-size:14.90px;color:#1c2b33;letter-spacing:-0.411px;">Create reel</span>
<div class="abs" style="left:1614px;top:10px;width:169px;height:36px;border-radius:4px;background:#0a78be"></div>
<div class="abs" style="left:1742px;top:10px;width:1px;height:36px;background:#5aa6d6"></div>
<span class="t" style="left:1650.80px;top:18.21px;font-size:14.40px;font-weight:700;color:#fff;letter-spacing:-0.412px;">Create post</span>
<svg class="i" style="left:1319.80px;top:21.00px;" width="16" height="14" viewBox="0 0 16 14"><path d="M1.5 3.2Q1.5 1.6 3.1 1.6H5.4Q6.1 1.6 6.6 2.1L7.3 2.8H11.7Q13.6 2.8 13.6 4.7V10.6Q13.6 12.3 11.9 12.3H3.2Q1.5 12.3 1.5 10.6Z" fill="none" stroke="#43525b" stroke-width="1.45" stroke-linejoin="round"/><path d="M7.6 5V8.6" stroke="#43525b" stroke-width="1.4" fill="none"/><path d="M5.1 7.6H10.1L7.6 10.4Z" fill="#43525b" stroke="#43525b" stroke-width=".5" stroke-linejoin="round"/></svg>
<svg class="i" style="left:1450.75px;top:25.00px;" width="10.5" height="6" viewBox="0 0 10.5 6"><path d="M0.6 0.4H9.9 Q10.5 0.6 10 1.3L5.75 5.6 Q5.25 6 4.75 5.6L0.5 1.3Q0 0.6 0.6 0.4Z" fill="#1c2b33"/></svg>
<svg class="i" style="left:1497.00px;top:21.00px;" width="14" height="14" viewBox="0 0 14 14"><path d="M0 5.1H13.8V11Q13.8 13.7 11.1 13.7H2.7Q0 13.7 0 11Z" fill="#1c2b33"/><path d="M5.2 7.2V11.6L9 9.4Z" fill="#fff"/><path d="M0 3.9Q0.2 0.6 2.6 0.2L1.9 3.9Z M3.2 3.9L3.9 0.1H6L5.3 3.9Z M6.6 3.9L7.3 0.1H9.4L8.7 3.9Z M10 3.9L10.7 0.1Q13.6 0.3 13.8 3.9Z" fill="#1c2b33"/></svg>
<svg class="i" style="left:1627.20px;top:22.50px;" width="13.6" height="10.8" viewBox="0 0 13.6 10.8"><rect width="13.6" height="10.8" rx="2.4" fill="#fff"/><path d="M2.9 3.4H10M2.9 6.1H5.8" stroke="#0a78be" stroke-width="1.3"/></svg>
<svg class="i" style="left:1757.75px;top:25.00px;" width="10.5" height="6" viewBox="0 0 10.5 6"><path d="M0.6 0.4H9.9 Q10.5 0.6 10 1.3L5.75 5.6 Q5.25 6 4.75 5.6L0.5 1.3Q0 0.6 0.6 0.4Z" fill="#fff"/></svg><svg class="i" style="left:1791.5px;top:10.5px" width="35" height="35" viewBox="0 0 35 35"><defs><clipPath id="pfc"><circle cx="17.5" cy="17.5" r="16"/></clipPath><filter id="pff"><feGaussianBlur stdDeviation=".8"/></filter></defs><circle cx="17.5" cy="17.5" r="17.5" fill="#fff"/><g clip-path="url(#pfc)"><g filter="url(#pff)"><rect width="35" height="35" fill="#dcd5c6"/><rect x="0" y="0" width="35" height="4" fill="#c8b58e"/><path d="M4 5H31L33 9H2Z" fill="#aab0cc"/><rect x="3" y="8.5" width="29" height="2" fill="#dfe4f4"/><rect x="9.5" y="11" width="14" height="12" fill="#17171c"/><rect x="2" y="11" width="7" height="16" fill="#d9c7b0"/><rect x="25.5" y="10" width="8" height="14" fill="#d2c3b4"/><rect x="10" y="15" width="6.6" height="10" rx="1.5" fill="#d8cfae"/><circle cx="13.3" cy="13.4" r="1.8" fill="#8a6a4e"/><rect x="18" y="15.5" width="7.5" height="11" rx="2" fill="#eadfcc"/><circle cx="19.8" cy="14.2" r="1.5" fill="#7a5a48"/><circle cx="23" cy="13.6" r="1.5" fill="#6a4a3a"/><rect x="10.6" y="24" width="4.6" height="9" fill="#15151a"/><ellipse cx="13" cy="21.8" rx="2.4" ry="1.8" fill="#1e1e22"/><path d="M15.5 24H20.5L21.5 35H14.5Z" fill="#e0b4b4"/><circle cx="17.8" cy="22.4" r="1.4" fill="#5a3f34"/><path d="M2 26H10V35H2Z" fill="#efece4"/></g></g></svg><svg class="i" style="left:1811.30px;top:30.10px;" width="15.4" height="15.4" viewBox="0 0 15.4 15.4"><circle cx="7.7" cy="7.7" r="7.7" fill="#fff"/><circle cx="7.7" cy="7.7" r="6" fill="#0866ff"/><path transform="translate(7.7 7.7) scale(0.75)" d="M1.1 8V2.3H3L3.3 0H1.1V-1.4Q1.1 -2.5 2.3 -2.5H3.4V-4.6Q2.6 -4.8 1.6 -4.8Q-1.4 -4.8 -1.4 -1.7V0H-3.3V2.3H-1.4V8Z" fill="#fff"/></svg>
<div class="abs" style="left:1308px;top:59px;width:300px;height:76px;border-radius:3px;background:#3578e5;box-shadow:0 1px 3px rgba(0,0,0,.18)"></div>
<svg class="i" style="left:1321px;top:50px" width="20" height="10" viewBox="0 0 20 10"><path d="M0 10 L10 0.3 L20 10Z" fill="#3578e5"/></svg>
<span class="t" style="left:1318.30px;top:68.18px;font-size:14.50px;color:#fff;letter-spacing:-0.152px;">Now you can export data found in the</span>
<span class="t" style="left:1318.30px;top:86.18px;font-size:14.50px;color:#fff;letter-spacing:-0.171px;">table below. Select export data to give it</span>
<span class="t" style="left:1318.30px;top:104.18px;font-size:14.50px;color:#fff;letter-spacing:-0.250px;">a try.</span>
<svg class="i" style="left:1584.6px;top:73.5px" width="11" height="11" viewBox="0 0 11 11"><path d="M1.1 1.1 L9.9 9.9 M9.9 1.1 L1.1 9.9" stroke="#dbe7fb" stroke-width="2" fill="none"/></svg>
</body></html>
